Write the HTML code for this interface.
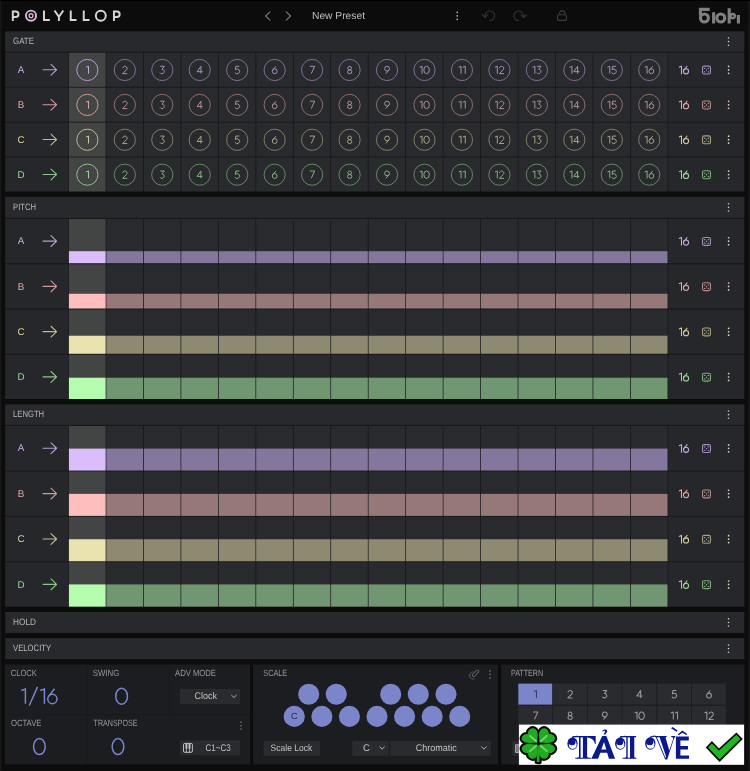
<!DOCTYPE html>
<html><head><meta charset="utf-8"><title>Polyllop</title>
<style>html,body{margin:0;padding:0;background:#0c0c0d;}svg{display:block;will-change:transform}text{font-family:"Liberation Sans",sans-serif;text-rendering:geometricPrecision;}</style></head>
<body>
<svg width="750" height="771" viewBox="0 0 750 771">
<rect width="750" height="771" fill="#0c0c0d"/>
<rect x="0.00" y="0.00" width="1.30" height="771.00" fill="#171718"/>
<rect x="748.20" y="0.00" width="1.80" height="771.00" fill="#171718"/>
<rect x="0.00" y="0.00" width="750.00" height="1.00" fill="#000"/>
<g fill="none" stroke="#d6d6d6" stroke-width="1.95" stroke-linejoin="miter"><path d="M12.8 10.5V21M12.8 11.45H15.7A2.75 2.75 0 0 1 15.7 16.95H12.8"/><path d="M43.95 10.5V20.05H49.8"/><path d="M54.5 10.5L58.9 16.7L63.3 10.5M58.9 16.2V21"/><path d="M70.75 10.5V20.05H76.5"/><path d="M83.75 10.5V20.05H89.5"/><circle cx="100.8" cy="15.75" r="4.95"/><path d="M113.95 10.5V21M113.95 11.45H116.9A2.75 2.75 0 0 1 116.9 16.95H113.95"/></g>
<circle cx="31.0" cy="15.7" r="5.05" fill="none" stroke="#d6b6f4" stroke-width="1.9"/>
<circle cx="31.0" cy="15.7" r="1.95" fill="none" stroke="#f0b0b0" stroke-width="1.3"/>
<path d="M270.0 11.9L265.6 16.0L270.0 20.1" fill="none" stroke="#7c7c7e" stroke-width="1.1" stroke-linecap="round" stroke-linejoin="round"/>
<path d="M286.2 11.9L290.6 16.0L286.2 20.1" fill="none" stroke="#7c7c7e" stroke-width="1.1" stroke-linecap="round" stroke-linejoin="round"/>
<text x="312.00" y="19.10" font-size="10.3" fill="#bfbfc1" textLength="53.00" lengthAdjust="spacingAndGlyphs">New Preset</text>
<circle cx="457.20" cy="12.40" r="0.8" fill="#bdbdbf"/>
<circle cx="457.20" cy="15.90" r="0.8" fill="#bdbdbf"/>
<circle cx="457.20" cy="19.40" r="0.8" fill="#bdbdbf"/>
<g fill="none" stroke="#353537" stroke-width="1.1" stroke-linecap="round" stroke-linejoin="round"><path d="M489.8 20.6A4.8 4.8 0 1 0 485.0 15.8M482.3 14.6L485.0 17.5L487.7 14.9"/><path d="M518.6 20.6A4.8 4.8 0 1 1 523.4 15.8M520.9 14.9L523.6 17.5L526.5 14.6"/></g>
<rect x="557.5" y="14.8" width="9.0" height="5.6" rx="1.3" fill="none" stroke="#3c3c3e" stroke-width="1.1"/>
<path d="M559.6 14.8V13.2A2.6 2.6 0 0 1 564.8 13.2V14.8" fill="none" stroke="#3c3c3e" stroke-width="1.1"/>
<g fill="none" stroke="#7f7f7f" stroke-width="3.1"><path d="M709.7 9.4H700.4V15.5"/><circle cx="704.4" cy="18.0" r="4.0"/><path d="M713.6 12.2V23.5"/><circle cx="720.8" cy="18.0" r="4.0"/><path d="M729.2 8.2V23.5"/><circle cx="732.7" cy="16.1" r="2.1" stroke-width="2.4"/><path d="M738.4 15.0V23.5"/></g>
<rect x="5.20" y="31.50" width="739.10" height="160.00" fill="#18181b"/>
<rect x="5.20" y="31.50" width="739.10" height="20.20" fill="#28292c"/>
<text x="13.10" y="44.30" font-size="9.2" fill="#b8b8ba" textLength="20.80" lengthAdjust="spacingAndGlyphs">GATE</text>
<circle cx="728.50" cy="38.00" r="0.8" fill="#d0d0d2"/>
<circle cx="728.50" cy="41.60" r="0.8" fill="#d0d0d2"/>
<circle cx="728.50" cy="45.20" r="0.8" fill="#d0d0d2"/>
<rect x="5.20" y="52.75" width="63.10" height="34.05" fill="#26272a"/>
<text x="21.00" y="72.93" font-size="9.8" fill="#c6abe6" text-anchor="middle">A</text>
<path d="M43.00 69.78H56.60M51.00 64.38L56.60 69.78L51.00 75.18" fill="none" stroke="#c6abe6" stroke-width="1.1" stroke-opacity="0.9" stroke-linecap="round" stroke-linejoin="round"/>
<rect x="668.30" y="52.75" width="76.00" height="34.05" fill="#26272a"/>
<g fill="none" stroke="#c6abe6" stroke-width="1.05"><path d="M678.9 67.17L681.5 66.17V74.17"/><circle cx="686.0" cy="71.28" r="2.6"/><path d="M687.3 65.97L683.8 70.17"/></g>
<rect x="702.55" y="66.12" width="7.9" height="7.9" rx="1.6" fill="none" stroke="#a08fbd" stroke-width="1.1"/>
<circle cx="704.76" cy="68.34" r="0.65" fill="#c6abe6"/>
<circle cx="708.24" cy="68.34" r="0.65" fill="#c6abe6"/>
<circle cx="706.50" cy="70.08" r="0.65" fill="#c6abe6"/>
<circle cx="704.76" cy="71.81" r="0.65" fill="#c6abe6"/>
<circle cx="708.24" cy="71.81" r="0.65" fill="#c6abe6"/>
<circle cx="728.60" cy="66.42" r="0.85" fill="#dccdf0"/>
<circle cx="728.60" cy="69.88" r="0.85" fill="#dccdf0"/>
<circle cx="728.60" cy="73.33" r="0.85" fill="#dccdf0"/>
<rect x="68.90" y="52.75" width="36.70" height="34.05" fill="#434444"/>
<circle cx="87.35" cy="69.98" r="10.6" fill="none" stroke="#b9a0d8" stroke-width="0.95"/>
<g fill="none" stroke="#c6abe6" stroke-width="1.000" stroke-linejoin="round"><path transform="translate(85.65,69.98) scale(1.0)" d="M0.5 -2.7L2.9 -3.7V3.7"/></g>
<rect x="106.36" y="52.75" width="36.70" height="34.05" fill="#292a2d"/>
<circle cx="124.81" cy="69.98" r="10.6" fill="none" stroke="#80729a" stroke-width="0.95"/>
<g fill="none" stroke="#a293bc" stroke-width="1.000" stroke-linejoin="round"><path transform="translate(121.91,69.98) scale(1.0)" d="M0.8 -1.7A2.2 2.05 0 1 1 4.55 -0.15L0.7 3.7H5.4"/></g>
<rect x="143.82" y="52.75" width="36.70" height="34.05" fill="#292a2d"/>
<circle cx="162.27" cy="69.98" r="10.6" fill="none" stroke="#80729a" stroke-width="0.95"/>
<g fill="none" stroke="#a293bc" stroke-width="1.000" stroke-linejoin="round"><path transform="translate(159.47,69.98) scale(1.0)" d="M0.8 -3.7H4.9L2.5 -0.8A2.3 2.25 0 1 1 0.5 2.6"/></g>
<rect x="181.28" y="52.75" width="36.70" height="34.05" fill="#292a2d"/>
<circle cx="199.73" cy="69.98" r="10.6" fill="none" stroke="#80729a" stroke-width="0.95"/>
<g fill="none" stroke="#a293bc" stroke-width="1.000" stroke-linejoin="round"><path transform="translate(196.53,69.98) scale(1.0)" d="M4.4 3.7V-3.7L0.55 1.7H6.1"/></g>
<rect x="218.74" y="52.75" width="36.70" height="34.05" fill="#292a2d"/>
<circle cx="237.19" cy="69.98" r="10.6" fill="none" stroke="#80729a" stroke-width="0.95"/>
<g fill="none" stroke="#a293bc" stroke-width="1.000" stroke-linejoin="round"><path transform="translate(234.39,69.98) scale(1.0)" d="M4.9 -3.7H1.45L1.0 -0.3A2.45 2.42 0 1 1 0.55 2.55"/></g>
<rect x="256.20" y="52.75" width="36.70" height="34.05" fill="#292a2d"/>
<circle cx="274.65" cy="69.98" r="10.6" fill="none" stroke="#80729a" stroke-width="0.95"/>
<g fill="none" stroke="#a293bc" stroke-width="1.000" stroke-linejoin="round"><path transform="translate(271.70,69.98) scale(1.0)" d="M4.3 -3.7L0.95 0.15M3.0 -1.1A2.4 2.4 0 1 0 3.0 3.7A2.4 2.4 0 1 0 3.0 -1.1Z"/></g>
<rect x="293.66" y="52.75" width="36.70" height="34.05" fill="#292a2d"/>
<circle cx="312.11" cy="69.98" r="10.6" fill="none" stroke="#80729a" stroke-width="0.95"/>
<g fill="none" stroke="#a293bc" stroke-width="1.000" stroke-linejoin="round"><path transform="translate(309.31,69.98) scale(1.0)" d="M0.5 -3.7H5.3L2.0 3.7"/></g>
<rect x="331.12" y="52.75" width="36.70" height="34.05" fill="#292a2d"/>
<circle cx="349.57" cy="69.98" r="10.6" fill="none" stroke="#80729a" stroke-width="0.95"/>
<g fill="none" stroke="#a293bc" stroke-width="1.000" stroke-linejoin="round"><path transform="translate(346.77,69.98) scale(1.0)" d="M2.9 -3.7A1.8 1.8 0 1 0 2.9 -0.1A1.8 1.8 0 1 0 2.9 -3.7ZM2.9 -0.1A2.15 1.9 0 1 0 2.9 3.7A2.15 1.9 0 1 0 2.9 -0.1Z"/></g>
<rect x="368.58" y="52.75" width="36.70" height="34.05" fill="#292a2d"/>
<circle cx="387.03" cy="69.98" r="10.6" fill="none" stroke="#80729a" stroke-width="0.95"/>
<g fill="none" stroke="#a293bc" stroke-width="1.000" stroke-linejoin="round"><path transform="translate(384.08,69.98) scale(1.0)" d="M5.05 -0.15L1.7 3.7M3.0 -3.7A2.4 2.4 0 1 0 3.0 1.1A2.4 2.4 0 1 0 3.0 -3.7Z"/></g>
<rect x="406.04" y="52.75" width="36.70" height="34.05" fill="#292a2d"/>
<circle cx="424.49" cy="69.98" r="10.6" fill="none" stroke="#80729a" stroke-width="0.95"/>
<g fill="none" stroke="#a293bc" stroke-width="1.000" stroke-linejoin="round"><path transform="translate(419.14,69.98) scale(1.0)" d="M0.5 -2.7L2.9 -3.7V3.7"/><path transform="translate(423.34,69.98) scale(1.0)" d="M3.25 -3.7A2.75 3.7 0 1 0 3.25 3.7A2.75 3.7 0 1 0 3.25 -3.7Z"/></g>
<rect x="443.50" y="52.75" width="36.70" height="34.05" fill="#292a2d"/>
<circle cx="461.95" cy="69.98" r="10.6" fill="none" stroke="#80729a" stroke-width="0.95"/>
<g fill="none" stroke="#a293bc" stroke-width="1.000" stroke-linejoin="round"><path transform="translate(458.15,69.98) scale(1.0)" d="M0.5 -2.7L2.9 -3.7V3.7"/><path transform="translate(462.35,69.98) scale(1.0)" d="M0.5 -2.7L2.9 -3.7V3.7"/></g>
<rect x="480.96" y="52.75" width="36.70" height="34.05" fill="#292a2d"/>
<circle cx="499.41" cy="69.98" r="10.6" fill="none" stroke="#80729a" stroke-width="0.95"/>
<g fill="none" stroke="#a293bc" stroke-width="1.000" stroke-linejoin="round"><path transform="translate(494.41,69.98) scale(1.0)" d="M0.5 -2.7L2.9 -3.7V3.7"/><path transform="translate(498.61,69.98) scale(1.0)" d="M0.8 -1.7A2.2 2.05 0 1 1 4.55 -0.15L0.7 3.7H5.4"/></g>
<rect x="518.42" y="52.75" width="36.70" height="34.05" fill="#292a2d"/>
<circle cx="536.87" cy="69.98" r="10.6" fill="none" stroke="#80729a" stroke-width="0.95"/>
<g fill="none" stroke="#a293bc" stroke-width="1.000" stroke-linejoin="round"><path transform="translate(531.97,69.98) scale(1.0)" d="M0.5 -2.7L2.9 -3.7V3.7"/><path transform="translate(536.17,69.98) scale(1.0)" d="M0.8 -3.7H4.9L2.5 -0.8A2.3 2.25 0 1 1 0.5 2.6"/></g>
<rect x="555.88" y="52.75" width="36.70" height="34.05" fill="#292a2d"/>
<circle cx="574.33" cy="69.98" r="10.6" fill="none" stroke="#80729a" stroke-width="0.95"/>
<g fill="none" stroke="#a293bc" stroke-width="1.000" stroke-linejoin="round"><path transform="translate(569.03,69.98) scale(1.0)" d="M0.5 -2.7L2.9 -3.7V3.7"/><path transform="translate(573.23,69.98) scale(1.0)" d="M4.4 3.7V-3.7L0.55 1.7H6.1"/></g>
<rect x="593.34" y="52.75" width="36.70" height="34.05" fill="#292a2d"/>
<circle cx="611.79" cy="69.98" r="10.6" fill="none" stroke="#80729a" stroke-width="0.95"/>
<g fill="none" stroke="#a293bc" stroke-width="1.000" stroke-linejoin="round"><path transform="translate(606.89,69.98) scale(1.0)" d="M0.5 -2.7L2.9 -3.7V3.7"/><path transform="translate(611.09,69.98) scale(1.0)" d="M4.9 -3.7H1.45L1.0 -0.3A2.45 2.42 0 1 1 0.55 2.55"/></g>
<rect x="630.80" y="52.75" width="36.70" height="34.05" fill="#292a2d"/>
<circle cx="649.25" cy="69.98" r="10.6" fill="none" stroke="#80729a" stroke-width="0.95"/>
<g fill="none" stroke="#a293bc" stroke-width="1.000" stroke-linejoin="round"><path transform="translate(644.20,69.98) scale(1.0)" d="M0.5 -2.7L2.9 -3.7V3.7"/><path transform="translate(648.40,69.98) scale(1.0)" d="M4.3 -3.7L0.95 0.15M3.0 -1.1A2.4 2.4 0 1 0 3.0 3.7A2.4 2.4 0 1 0 3.0 -1.1Z"/></g>
<rect x="5.20" y="87.65" width="63.10" height="34.05" fill="#26272a"/>
<text x="21.00" y="107.83" font-size="9.8" fill="#e3a7a7" text-anchor="middle">B</text>
<path d="M43.00 104.68H56.60M51.00 99.28L56.60 104.68L51.00 110.08" fill="none" stroke="#e3a7a7" stroke-width="1.1" stroke-opacity="0.9" stroke-linecap="round" stroke-linejoin="round"/>
<rect x="668.30" y="87.65" width="76.00" height="34.05" fill="#26272a"/>
<g fill="none" stroke="#e3a7a7" stroke-width="1.05"><path d="M678.9 102.08L681.5 101.08V109.08"/><circle cx="686.0" cy="106.18" r="2.6"/><path d="M687.3 100.88L683.8 105.08"/></g>
<rect x="702.55" y="101.03" width="7.9" height="7.9" rx="1.6" fill="none" stroke="#b58b8c" stroke-width="1.1"/>
<circle cx="704.76" cy="103.24" r="0.65" fill="#e3a7a7"/>
<circle cx="708.24" cy="103.24" r="0.65" fill="#e3a7a7"/>
<circle cx="706.50" cy="104.98" r="0.65" fill="#e3a7a7"/>
<circle cx="704.76" cy="106.71" r="0.65" fill="#e3a7a7"/>
<circle cx="708.24" cy="106.71" r="0.65" fill="#e3a7a7"/>
<circle cx="728.60" cy="101.33" r="0.85" fill="#f0c8c8"/>
<circle cx="728.60" cy="104.78" r="0.85" fill="#f0c8c8"/>
<circle cx="728.60" cy="108.23" r="0.85" fill="#f0c8c8"/>
<rect x="68.90" y="87.65" width="36.70" height="34.05" fill="#434444"/>
<circle cx="87.35" cy="104.88" r="10.6" fill="none" stroke="#d39c9c" stroke-width="0.95"/>
<g fill="none" stroke="#e3a7a7" stroke-width="1.000" stroke-linejoin="round"><path transform="translate(85.65,104.88) scale(1.0)" d="M0.5 -2.7L2.9 -3.7V3.7"/></g>
<rect x="106.36" y="87.65" width="36.70" height="34.05" fill="#292a2d"/>
<circle cx="124.81" cy="104.88" r="10.6" fill="none" stroke="#8f7173" stroke-width="0.95"/>
<g fill="none" stroke="#b08e90" stroke-width="1.000" stroke-linejoin="round"><path transform="translate(121.91,104.88) scale(1.0)" d="M0.8 -1.7A2.2 2.05 0 1 1 4.55 -0.15L0.7 3.7H5.4"/></g>
<rect x="143.82" y="87.65" width="36.70" height="34.05" fill="#292a2d"/>
<circle cx="162.27" cy="104.88" r="10.6" fill="none" stroke="#8f7173" stroke-width="0.95"/>
<g fill="none" stroke="#b08e90" stroke-width="1.000" stroke-linejoin="round"><path transform="translate(159.47,104.88) scale(1.0)" d="M0.8 -3.7H4.9L2.5 -0.8A2.3 2.25 0 1 1 0.5 2.6"/></g>
<rect x="181.28" y="87.65" width="36.70" height="34.05" fill="#292a2d"/>
<circle cx="199.73" cy="104.88" r="10.6" fill="none" stroke="#8f7173" stroke-width="0.95"/>
<g fill="none" stroke="#b08e90" stroke-width="1.000" stroke-linejoin="round"><path transform="translate(196.53,104.88) scale(1.0)" d="M4.4 3.7V-3.7L0.55 1.7H6.1"/></g>
<rect x="218.74" y="87.65" width="36.70" height="34.05" fill="#292a2d"/>
<circle cx="237.19" cy="104.88" r="10.6" fill="none" stroke="#8f7173" stroke-width="0.95"/>
<g fill="none" stroke="#b08e90" stroke-width="1.000" stroke-linejoin="round"><path transform="translate(234.39,104.88) scale(1.0)" d="M4.9 -3.7H1.45L1.0 -0.3A2.45 2.42 0 1 1 0.55 2.55"/></g>
<rect x="256.20" y="87.65" width="36.70" height="34.05" fill="#292a2d"/>
<circle cx="274.65" cy="104.88" r="10.6" fill="none" stroke="#8f7173" stroke-width="0.95"/>
<g fill="none" stroke="#b08e90" stroke-width="1.000" stroke-linejoin="round"><path transform="translate(271.70,104.88) scale(1.0)" d="M4.3 -3.7L0.95 0.15M3.0 -1.1A2.4 2.4 0 1 0 3.0 3.7A2.4 2.4 0 1 0 3.0 -1.1Z"/></g>
<rect x="293.66" y="87.65" width="36.70" height="34.05" fill="#292a2d"/>
<circle cx="312.11" cy="104.88" r="10.6" fill="none" stroke="#8f7173" stroke-width="0.95"/>
<g fill="none" stroke="#b08e90" stroke-width="1.000" stroke-linejoin="round"><path transform="translate(309.31,104.88) scale(1.0)" d="M0.5 -3.7H5.3L2.0 3.7"/></g>
<rect x="331.12" y="87.65" width="36.70" height="34.05" fill="#292a2d"/>
<circle cx="349.57" cy="104.88" r="10.6" fill="none" stroke="#8f7173" stroke-width="0.95"/>
<g fill="none" stroke="#b08e90" stroke-width="1.000" stroke-linejoin="round"><path transform="translate(346.77,104.88) scale(1.0)" d="M2.9 -3.7A1.8 1.8 0 1 0 2.9 -0.1A1.8 1.8 0 1 0 2.9 -3.7ZM2.9 -0.1A2.15 1.9 0 1 0 2.9 3.7A2.15 1.9 0 1 0 2.9 -0.1Z"/></g>
<rect x="368.58" y="87.65" width="36.70" height="34.05" fill="#292a2d"/>
<circle cx="387.03" cy="104.88" r="10.6" fill="none" stroke="#8f7173" stroke-width="0.95"/>
<g fill="none" stroke="#b08e90" stroke-width="1.000" stroke-linejoin="round"><path transform="translate(384.08,104.88) scale(1.0)" d="M5.05 -0.15L1.7 3.7M3.0 -3.7A2.4 2.4 0 1 0 3.0 1.1A2.4 2.4 0 1 0 3.0 -3.7Z"/></g>
<rect x="406.04" y="87.65" width="36.70" height="34.05" fill="#292a2d"/>
<circle cx="424.49" cy="104.88" r="10.6" fill="none" stroke="#8f7173" stroke-width="0.95"/>
<g fill="none" stroke="#b08e90" stroke-width="1.000" stroke-linejoin="round"><path transform="translate(419.14,104.88) scale(1.0)" d="M0.5 -2.7L2.9 -3.7V3.7"/><path transform="translate(423.34,104.88) scale(1.0)" d="M3.25 -3.7A2.75 3.7 0 1 0 3.25 3.7A2.75 3.7 0 1 0 3.25 -3.7Z"/></g>
<rect x="443.50" y="87.65" width="36.70" height="34.05" fill="#292a2d"/>
<circle cx="461.95" cy="104.88" r="10.6" fill="none" stroke="#8f7173" stroke-width="0.95"/>
<g fill="none" stroke="#b08e90" stroke-width="1.000" stroke-linejoin="round"><path transform="translate(458.15,104.88) scale(1.0)" d="M0.5 -2.7L2.9 -3.7V3.7"/><path transform="translate(462.35,104.88) scale(1.0)" d="M0.5 -2.7L2.9 -3.7V3.7"/></g>
<rect x="480.96" y="87.65" width="36.70" height="34.05" fill="#292a2d"/>
<circle cx="499.41" cy="104.88" r="10.6" fill="none" stroke="#8f7173" stroke-width="0.95"/>
<g fill="none" stroke="#b08e90" stroke-width="1.000" stroke-linejoin="round"><path transform="translate(494.41,104.88) scale(1.0)" d="M0.5 -2.7L2.9 -3.7V3.7"/><path transform="translate(498.61,104.88) scale(1.0)" d="M0.8 -1.7A2.2 2.05 0 1 1 4.55 -0.15L0.7 3.7H5.4"/></g>
<rect x="518.42" y="87.65" width="36.70" height="34.05" fill="#292a2d"/>
<circle cx="536.87" cy="104.88" r="10.6" fill="none" stroke="#8f7173" stroke-width="0.95"/>
<g fill="none" stroke="#b08e90" stroke-width="1.000" stroke-linejoin="round"><path transform="translate(531.97,104.88) scale(1.0)" d="M0.5 -2.7L2.9 -3.7V3.7"/><path transform="translate(536.17,104.88) scale(1.0)" d="M0.8 -3.7H4.9L2.5 -0.8A2.3 2.25 0 1 1 0.5 2.6"/></g>
<rect x="555.88" y="87.65" width="36.70" height="34.05" fill="#292a2d"/>
<circle cx="574.33" cy="104.88" r="10.6" fill="none" stroke="#8f7173" stroke-width="0.95"/>
<g fill="none" stroke="#b08e90" stroke-width="1.000" stroke-linejoin="round"><path transform="translate(569.03,104.88) scale(1.0)" d="M0.5 -2.7L2.9 -3.7V3.7"/><path transform="translate(573.23,104.88) scale(1.0)" d="M4.4 3.7V-3.7L0.55 1.7H6.1"/></g>
<rect x="593.34" y="87.65" width="36.70" height="34.05" fill="#292a2d"/>
<circle cx="611.79" cy="104.88" r="10.6" fill="none" stroke="#8f7173" stroke-width="0.95"/>
<g fill="none" stroke="#b08e90" stroke-width="1.000" stroke-linejoin="round"><path transform="translate(606.89,104.88) scale(1.0)" d="M0.5 -2.7L2.9 -3.7V3.7"/><path transform="translate(611.09,104.88) scale(1.0)" d="M4.9 -3.7H1.45L1.0 -0.3A2.45 2.42 0 1 1 0.55 2.55"/></g>
<rect x="630.80" y="87.65" width="36.70" height="34.05" fill="#292a2d"/>
<circle cx="649.25" cy="104.88" r="10.6" fill="none" stroke="#8f7173" stroke-width="0.95"/>
<g fill="none" stroke="#b08e90" stroke-width="1.000" stroke-linejoin="round"><path transform="translate(644.20,104.88) scale(1.0)" d="M0.5 -2.7L2.9 -3.7V3.7"/><path transform="translate(648.40,104.88) scale(1.0)" d="M4.3 -3.7L0.95 0.15M3.0 -1.1A2.4 2.4 0 1 0 3.0 3.7A2.4 2.4 0 1 0 3.0 -1.1Z"/></g>
<rect x="5.20" y="122.55" width="63.10" height="34.05" fill="#26272a"/>
<text x="21.00" y="142.72" font-size="9.8" fill="#d3cc9a" text-anchor="middle">C</text>
<path d="M43.00 139.57H56.60M51.00 134.17L56.60 139.57L51.00 144.97" fill="none" stroke="#d3cc9a" stroke-width="1.1" stroke-opacity="0.9" stroke-linecap="round" stroke-linejoin="round"/>
<rect x="668.30" y="122.55" width="76.00" height="34.05" fill="#26272a"/>
<g fill="none" stroke="#d3cc9a" stroke-width="1.05"><path d="M678.9 136.97L681.5 135.97V143.97"/><circle cx="686.0" cy="141.07" r="2.6"/><path d="M687.3 135.77L683.8 139.97"/></g>
<rect x="702.55" y="135.92" width="7.9" height="7.9" rx="1.6" fill="none" stroke="#a8a37f" stroke-width="1.1"/>
<circle cx="704.76" cy="138.14" r="0.65" fill="#d3cc9a"/>
<circle cx="708.24" cy="138.14" r="0.65" fill="#d3cc9a"/>
<circle cx="706.50" cy="139.87" r="0.65" fill="#d3cc9a"/>
<circle cx="704.76" cy="141.61" r="0.65" fill="#d3cc9a"/>
<circle cx="708.24" cy="141.61" r="0.65" fill="#d3cc9a"/>
<circle cx="728.60" cy="136.22" r="0.85" fill="#e6e0bd"/>
<circle cx="728.60" cy="139.67" r="0.85" fill="#e6e0bd"/>
<circle cx="728.60" cy="143.12" r="0.85" fill="#e6e0bd"/>
<rect x="68.90" y="122.55" width="36.70" height="34.05" fill="#434444"/>
<circle cx="87.35" cy="139.77" r="10.6" fill="none" stroke="#c6bf90" stroke-width="0.95"/>
<g fill="none" stroke="#d3cc9a" stroke-width="1.000" stroke-linejoin="round"><path transform="translate(85.65,139.77) scale(1.0)" d="M0.5 -2.7L2.9 -3.7V3.7"/></g>
<rect x="106.36" y="122.55" width="36.70" height="34.05" fill="#292a2d"/>
<circle cx="124.81" cy="139.77" r="10.6" fill="none" stroke="#858167" stroke-width="0.95"/>
<g fill="none" stroke="#a7a283" stroke-width="1.000" stroke-linejoin="round"><path transform="translate(121.91,139.77) scale(1.0)" d="M0.8 -1.7A2.2 2.05 0 1 1 4.55 -0.15L0.7 3.7H5.4"/></g>
<rect x="143.82" y="122.55" width="36.70" height="34.05" fill="#292a2d"/>
<circle cx="162.27" cy="139.77" r="10.6" fill="none" stroke="#858167" stroke-width="0.95"/>
<g fill="none" stroke="#a7a283" stroke-width="1.000" stroke-linejoin="round"><path transform="translate(159.47,139.77) scale(1.0)" d="M0.8 -3.7H4.9L2.5 -0.8A2.3 2.25 0 1 1 0.5 2.6"/></g>
<rect x="181.28" y="122.55" width="36.70" height="34.05" fill="#292a2d"/>
<circle cx="199.73" cy="139.77" r="10.6" fill="none" stroke="#858167" stroke-width="0.95"/>
<g fill="none" stroke="#a7a283" stroke-width="1.000" stroke-linejoin="round"><path transform="translate(196.53,139.77) scale(1.0)" d="M4.4 3.7V-3.7L0.55 1.7H6.1"/></g>
<rect x="218.74" y="122.55" width="36.70" height="34.05" fill="#292a2d"/>
<circle cx="237.19" cy="139.77" r="10.6" fill="none" stroke="#858167" stroke-width="0.95"/>
<g fill="none" stroke="#a7a283" stroke-width="1.000" stroke-linejoin="round"><path transform="translate(234.39,139.77) scale(1.0)" d="M4.9 -3.7H1.45L1.0 -0.3A2.45 2.42 0 1 1 0.55 2.55"/></g>
<rect x="256.20" y="122.55" width="36.70" height="34.05" fill="#292a2d"/>
<circle cx="274.65" cy="139.77" r="10.6" fill="none" stroke="#858167" stroke-width="0.95"/>
<g fill="none" stroke="#a7a283" stroke-width="1.000" stroke-linejoin="round"><path transform="translate(271.70,139.77) scale(1.0)" d="M4.3 -3.7L0.95 0.15M3.0 -1.1A2.4 2.4 0 1 0 3.0 3.7A2.4 2.4 0 1 0 3.0 -1.1Z"/></g>
<rect x="293.66" y="122.55" width="36.70" height="34.05" fill="#292a2d"/>
<circle cx="312.11" cy="139.77" r="10.6" fill="none" stroke="#858167" stroke-width="0.95"/>
<g fill="none" stroke="#a7a283" stroke-width="1.000" stroke-linejoin="round"><path transform="translate(309.31,139.77) scale(1.0)" d="M0.5 -3.7H5.3L2.0 3.7"/></g>
<rect x="331.12" y="122.55" width="36.70" height="34.05" fill="#292a2d"/>
<circle cx="349.57" cy="139.77" r="10.6" fill="none" stroke="#858167" stroke-width="0.95"/>
<g fill="none" stroke="#a7a283" stroke-width="1.000" stroke-linejoin="round"><path transform="translate(346.77,139.77) scale(1.0)" d="M2.9 -3.7A1.8 1.8 0 1 0 2.9 -0.1A1.8 1.8 0 1 0 2.9 -3.7ZM2.9 -0.1A2.15 1.9 0 1 0 2.9 3.7A2.15 1.9 0 1 0 2.9 -0.1Z"/></g>
<rect x="368.58" y="122.55" width="36.70" height="34.05" fill="#292a2d"/>
<circle cx="387.03" cy="139.77" r="10.6" fill="none" stroke="#858167" stroke-width="0.95"/>
<g fill="none" stroke="#a7a283" stroke-width="1.000" stroke-linejoin="round"><path transform="translate(384.08,139.77) scale(1.0)" d="M5.05 -0.15L1.7 3.7M3.0 -3.7A2.4 2.4 0 1 0 3.0 1.1A2.4 2.4 0 1 0 3.0 -3.7Z"/></g>
<rect x="406.04" y="122.55" width="36.70" height="34.05" fill="#292a2d"/>
<circle cx="424.49" cy="139.77" r="10.6" fill="none" stroke="#858167" stroke-width="0.95"/>
<g fill="none" stroke="#a7a283" stroke-width="1.000" stroke-linejoin="round"><path transform="translate(419.14,139.77) scale(1.0)" d="M0.5 -2.7L2.9 -3.7V3.7"/><path transform="translate(423.34,139.77) scale(1.0)" d="M3.25 -3.7A2.75 3.7 0 1 0 3.25 3.7A2.75 3.7 0 1 0 3.25 -3.7Z"/></g>
<rect x="443.50" y="122.55" width="36.70" height="34.05" fill="#292a2d"/>
<circle cx="461.95" cy="139.77" r="10.6" fill="none" stroke="#858167" stroke-width="0.95"/>
<g fill="none" stroke="#a7a283" stroke-width="1.000" stroke-linejoin="round"><path transform="translate(458.15,139.77) scale(1.0)" d="M0.5 -2.7L2.9 -3.7V3.7"/><path transform="translate(462.35,139.77) scale(1.0)" d="M0.5 -2.7L2.9 -3.7V3.7"/></g>
<rect x="480.96" y="122.55" width="36.70" height="34.05" fill="#292a2d"/>
<circle cx="499.41" cy="139.77" r="10.6" fill="none" stroke="#858167" stroke-width="0.95"/>
<g fill="none" stroke="#a7a283" stroke-width="1.000" stroke-linejoin="round"><path transform="translate(494.41,139.77) scale(1.0)" d="M0.5 -2.7L2.9 -3.7V3.7"/><path transform="translate(498.61,139.77) scale(1.0)" d="M0.8 -1.7A2.2 2.05 0 1 1 4.55 -0.15L0.7 3.7H5.4"/></g>
<rect x="518.42" y="122.55" width="36.70" height="34.05" fill="#292a2d"/>
<circle cx="536.87" cy="139.77" r="10.6" fill="none" stroke="#858167" stroke-width="0.95"/>
<g fill="none" stroke="#a7a283" stroke-width="1.000" stroke-linejoin="round"><path transform="translate(531.97,139.77) scale(1.0)" d="M0.5 -2.7L2.9 -3.7V3.7"/><path transform="translate(536.17,139.77) scale(1.0)" d="M0.8 -3.7H4.9L2.5 -0.8A2.3 2.25 0 1 1 0.5 2.6"/></g>
<rect x="555.88" y="122.55" width="36.70" height="34.05" fill="#292a2d"/>
<circle cx="574.33" cy="139.77" r="10.6" fill="none" stroke="#858167" stroke-width="0.95"/>
<g fill="none" stroke="#a7a283" stroke-width="1.000" stroke-linejoin="round"><path transform="translate(569.03,139.77) scale(1.0)" d="M0.5 -2.7L2.9 -3.7V3.7"/><path transform="translate(573.23,139.77) scale(1.0)" d="M4.4 3.7V-3.7L0.55 1.7H6.1"/></g>
<rect x="593.34" y="122.55" width="36.70" height="34.05" fill="#292a2d"/>
<circle cx="611.79" cy="139.77" r="10.6" fill="none" stroke="#858167" stroke-width="0.95"/>
<g fill="none" stroke="#a7a283" stroke-width="1.000" stroke-linejoin="round"><path transform="translate(606.89,139.77) scale(1.0)" d="M0.5 -2.7L2.9 -3.7V3.7"/><path transform="translate(611.09,139.77) scale(1.0)" d="M4.9 -3.7H1.45L1.0 -0.3A2.45 2.42 0 1 1 0.55 2.55"/></g>
<rect x="630.80" y="122.55" width="36.70" height="34.05" fill="#292a2d"/>
<circle cx="649.25" cy="139.77" r="10.6" fill="none" stroke="#858167" stroke-width="0.95"/>
<g fill="none" stroke="#a7a283" stroke-width="1.000" stroke-linejoin="round"><path transform="translate(644.20,139.77) scale(1.0)" d="M0.5 -2.7L2.9 -3.7V3.7"/><path transform="translate(648.40,139.77) scale(1.0)" d="M4.3 -3.7L0.95 0.15M3.0 -1.1A2.4 2.4 0 1 0 3.0 3.7A2.4 2.4 0 1 0 3.0 -1.1Z"/></g>
<rect x="5.20" y="157.45" width="63.10" height="34.05" fill="#26272a"/>
<text x="21.00" y="177.62" font-size="9.8" fill="#98d895" text-anchor="middle">D</text>
<path d="M43.00 174.47H56.60M51.00 169.07L56.60 174.47L51.00 179.88" fill="none" stroke="#98d895" stroke-width="1.1" stroke-opacity="0.9" stroke-linecap="round" stroke-linejoin="round"/>
<rect x="668.30" y="157.45" width="76.00" height="34.05" fill="#26272a"/>
<g fill="none" stroke="#98d895" stroke-width="1.05"><path d="M678.9 171.88L681.5 170.88V178.88"/><circle cx="686.0" cy="175.97" r="2.6"/><path d="M687.3 170.67L683.8 174.88"/></g>
<rect x="702.55" y="170.82" width="7.9" height="7.9" rx="1.6" fill="none" stroke="#7fae7d" stroke-width="1.1"/>
<circle cx="704.76" cy="173.04" r="0.65" fill="#98d895"/>
<circle cx="708.24" cy="173.04" r="0.65" fill="#98d895"/>
<circle cx="706.50" cy="174.77" r="0.65" fill="#98d895"/>
<circle cx="704.76" cy="176.51" r="0.65" fill="#98d895"/>
<circle cx="708.24" cy="176.51" r="0.65" fill="#98d895"/>
<circle cx="728.60" cy="171.12" r="0.85" fill="#bfe8bc"/>
<circle cx="728.60" cy="174.57" r="0.85" fill="#bfe8bc"/>
<circle cx="728.60" cy="178.02" r="0.85" fill="#bfe8bc"/>
<rect x="68.90" y="157.45" width="36.70" height="34.05" fill="#434444"/>
<circle cx="87.35" cy="174.67" r="10.6" fill="none" stroke="#8dca8a" stroke-width="0.95"/>
<g fill="none" stroke="#98d895" stroke-width="1.000" stroke-linejoin="round"><path transform="translate(85.65,174.67) scale(1.0)" d="M0.5 -2.7L2.9 -3.7V3.7"/></g>
<rect x="106.36" y="157.45" width="36.70" height="34.05" fill="#292a2d"/>
<circle cx="124.81" cy="174.67" r="10.6" fill="none" stroke="#658d65" stroke-width="0.95"/>
<g fill="none" stroke="#82b181" stroke-width="1.000" stroke-linejoin="round"><path transform="translate(121.91,174.67) scale(1.0)" d="M0.8 -1.7A2.2 2.05 0 1 1 4.55 -0.15L0.7 3.7H5.4"/></g>
<rect x="143.82" y="157.45" width="36.70" height="34.05" fill="#292a2d"/>
<circle cx="162.27" cy="174.67" r="10.6" fill="none" stroke="#658d65" stroke-width="0.95"/>
<g fill="none" stroke="#82b181" stroke-width="1.000" stroke-linejoin="round"><path transform="translate(159.47,174.67) scale(1.0)" d="M0.8 -3.7H4.9L2.5 -0.8A2.3 2.25 0 1 1 0.5 2.6"/></g>
<rect x="181.28" y="157.45" width="36.70" height="34.05" fill="#292a2d"/>
<circle cx="199.73" cy="174.67" r="10.6" fill="none" stroke="#658d65" stroke-width="0.95"/>
<g fill="none" stroke="#82b181" stroke-width="1.000" stroke-linejoin="round"><path transform="translate(196.53,174.67) scale(1.0)" d="M4.4 3.7V-3.7L0.55 1.7H6.1"/></g>
<rect x="218.74" y="157.45" width="36.70" height="34.05" fill="#292a2d"/>
<circle cx="237.19" cy="174.67" r="10.6" fill="none" stroke="#658d65" stroke-width="0.95"/>
<g fill="none" stroke="#82b181" stroke-width="1.000" stroke-linejoin="round"><path transform="translate(234.39,174.67) scale(1.0)" d="M4.9 -3.7H1.45L1.0 -0.3A2.45 2.42 0 1 1 0.55 2.55"/></g>
<rect x="256.20" y="157.45" width="36.70" height="34.05" fill="#292a2d"/>
<circle cx="274.65" cy="174.67" r="10.6" fill="none" stroke="#658d65" stroke-width="0.95"/>
<g fill="none" stroke="#82b181" stroke-width="1.000" stroke-linejoin="round"><path transform="translate(271.70,174.67) scale(1.0)" d="M4.3 -3.7L0.95 0.15M3.0 -1.1A2.4 2.4 0 1 0 3.0 3.7A2.4 2.4 0 1 0 3.0 -1.1Z"/></g>
<rect x="293.66" y="157.45" width="36.70" height="34.05" fill="#292a2d"/>
<circle cx="312.11" cy="174.67" r="10.6" fill="none" stroke="#658d65" stroke-width="0.95"/>
<g fill="none" stroke="#82b181" stroke-width="1.000" stroke-linejoin="round"><path transform="translate(309.31,174.67) scale(1.0)" d="M0.5 -3.7H5.3L2.0 3.7"/></g>
<rect x="331.12" y="157.45" width="36.70" height="34.05" fill="#292a2d"/>
<circle cx="349.57" cy="174.67" r="10.6" fill="none" stroke="#658d65" stroke-width="0.95"/>
<g fill="none" stroke="#82b181" stroke-width="1.000" stroke-linejoin="round"><path transform="translate(346.77,174.67) scale(1.0)" d="M2.9 -3.7A1.8 1.8 0 1 0 2.9 -0.1A1.8 1.8 0 1 0 2.9 -3.7ZM2.9 -0.1A2.15 1.9 0 1 0 2.9 3.7A2.15 1.9 0 1 0 2.9 -0.1Z"/></g>
<rect x="368.58" y="157.45" width="36.70" height="34.05" fill="#292a2d"/>
<circle cx="387.03" cy="174.67" r="10.6" fill="none" stroke="#658d65" stroke-width="0.95"/>
<g fill="none" stroke="#82b181" stroke-width="1.000" stroke-linejoin="round"><path transform="translate(384.08,174.67) scale(1.0)" d="M5.05 -0.15L1.7 3.7M3.0 -3.7A2.4 2.4 0 1 0 3.0 1.1A2.4 2.4 0 1 0 3.0 -3.7Z"/></g>
<rect x="406.04" y="157.45" width="36.70" height="34.05" fill="#292a2d"/>
<circle cx="424.49" cy="174.67" r="10.6" fill="none" stroke="#658d65" stroke-width="0.95"/>
<g fill="none" stroke="#82b181" stroke-width="1.000" stroke-linejoin="round"><path transform="translate(419.14,174.67) scale(1.0)" d="M0.5 -2.7L2.9 -3.7V3.7"/><path transform="translate(423.34,174.67) scale(1.0)" d="M3.25 -3.7A2.75 3.7 0 1 0 3.25 3.7A2.75 3.7 0 1 0 3.25 -3.7Z"/></g>
<rect x="443.50" y="157.45" width="36.70" height="34.05" fill="#292a2d"/>
<circle cx="461.95" cy="174.67" r="10.6" fill="none" stroke="#658d65" stroke-width="0.95"/>
<g fill="none" stroke="#82b181" stroke-width="1.000" stroke-linejoin="round"><path transform="translate(458.15,174.67) scale(1.0)" d="M0.5 -2.7L2.9 -3.7V3.7"/><path transform="translate(462.35,174.67) scale(1.0)" d="M0.5 -2.7L2.9 -3.7V3.7"/></g>
<rect x="480.96" y="157.45" width="36.70" height="34.05" fill="#292a2d"/>
<circle cx="499.41" cy="174.67" r="10.6" fill="none" stroke="#658d65" stroke-width="0.95"/>
<g fill="none" stroke="#82b181" stroke-width="1.000" stroke-linejoin="round"><path transform="translate(494.41,174.67) scale(1.0)" d="M0.5 -2.7L2.9 -3.7V3.7"/><path transform="translate(498.61,174.67) scale(1.0)" d="M0.8 -1.7A2.2 2.05 0 1 1 4.55 -0.15L0.7 3.7H5.4"/></g>
<rect x="518.42" y="157.45" width="36.70" height="34.05" fill="#292a2d"/>
<circle cx="536.87" cy="174.67" r="10.6" fill="none" stroke="#658d65" stroke-width="0.95"/>
<g fill="none" stroke="#82b181" stroke-width="1.000" stroke-linejoin="round"><path transform="translate(531.97,174.67) scale(1.0)" d="M0.5 -2.7L2.9 -3.7V3.7"/><path transform="translate(536.17,174.67) scale(1.0)" d="M0.8 -3.7H4.9L2.5 -0.8A2.3 2.25 0 1 1 0.5 2.6"/></g>
<rect x="555.88" y="157.45" width="36.70" height="34.05" fill="#292a2d"/>
<circle cx="574.33" cy="174.67" r="10.6" fill="none" stroke="#658d65" stroke-width="0.95"/>
<g fill="none" stroke="#82b181" stroke-width="1.000" stroke-linejoin="round"><path transform="translate(569.03,174.67) scale(1.0)" d="M0.5 -2.7L2.9 -3.7V3.7"/><path transform="translate(573.23,174.67) scale(1.0)" d="M4.4 3.7V-3.7L0.55 1.7H6.1"/></g>
<rect x="593.34" y="157.45" width="36.70" height="34.05" fill="#292a2d"/>
<circle cx="611.79" cy="174.67" r="10.6" fill="none" stroke="#658d65" stroke-width="0.95"/>
<g fill="none" stroke="#82b181" stroke-width="1.000" stroke-linejoin="round"><path transform="translate(606.89,174.67) scale(1.0)" d="M0.5 -2.7L2.9 -3.7V3.7"/><path transform="translate(611.09,174.67) scale(1.0)" d="M4.9 -3.7H1.45L1.0 -0.3A2.45 2.42 0 1 1 0.55 2.55"/></g>
<rect x="630.80" y="157.45" width="36.70" height="34.05" fill="#292a2d"/>
<circle cx="649.25" cy="174.67" r="10.6" fill="none" stroke="#658d65" stroke-width="0.95"/>
<g fill="none" stroke="#82b181" stroke-width="1.000" stroke-linejoin="round"><path transform="translate(644.20,174.67) scale(1.0)" d="M0.5 -2.7L2.9 -3.7V3.7"/><path transform="translate(648.40,174.67) scale(1.0)" d="M4.3 -3.7L0.95 0.15M3.0 -1.1A2.4 2.4 0 1 0 3.0 3.7A2.4 2.4 0 1 0 3.0 -1.1Z"/></g>
<rect x="5.20" y="196.80" width="739.10" height="202.21" fill="#18181b"/>
<rect x="5.20" y="196.80" width="739.10" height="21.10" fill="#28292c"/>
<text x="13.10" y="210.05" font-size="9.2" fill="#b8b8ba" textLength="23.00" lengthAdjust="spacingAndGlyphs">PITCH</text>
<circle cx="728.50" cy="203.75" r="0.8" fill="#d0d0d2"/>
<circle cx="728.50" cy="207.35" r="0.8" fill="#d0d0d2"/>
<circle cx="728.50" cy="210.95" r="0.8" fill="#d0d0d2"/>
<rect x="5.20" y="219.00" width="63.10" height="44.20" fill="#26272a"/>
<text x="21.00" y="244.25" font-size="9.8" fill="#c6abe6" text-anchor="middle">A</text>
<path d="M43.00 241.10H56.60M51.00 235.70L56.60 241.10L51.00 246.50" fill="none" stroke="#c6abe6" stroke-width="1.1" stroke-opacity="0.9" stroke-linecap="round" stroke-linejoin="round"/>
<rect x="668.30" y="219.00" width="76.00" height="44.20" fill="#26272a"/>
<g fill="none" stroke="#c6abe6" stroke-width="1.05"><path d="M678.9 238.50L681.5 237.50V245.50"/><circle cx="686.0" cy="242.60" r="2.6"/><path d="M687.3 237.30L683.8 241.50"/></g>
<rect x="702.55" y="237.45" width="7.9" height="7.9" rx="1.6" fill="none" stroke="#a08fbd" stroke-width="1.1"/>
<circle cx="704.76" cy="239.66" r="0.65" fill="#c6abe6"/>
<circle cx="708.24" cy="239.66" r="0.65" fill="#c6abe6"/>
<circle cx="706.50" cy="241.40" r="0.65" fill="#c6abe6"/>
<circle cx="704.76" cy="243.14" r="0.65" fill="#c6abe6"/>
<circle cx="708.24" cy="243.14" r="0.65" fill="#c6abe6"/>
<circle cx="728.60" cy="237.75" r="0.85" fill="#dccdf0"/>
<circle cx="728.60" cy="241.20" r="0.85" fill="#dccdf0"/>
<circle cx="728.60" cy="244.65" r="0.85" fill="#dccdf0"/>
<rect x="68.90" y="219.00" width="36.70" height="44.20" fill="#434444"/>
<rect x="68.90" y="251.20" width="36.70" height="12.00" fill="#dcbdfc"/>
<rect x="106.36" y="219.00" width="36.70" height="44.20" fill="#292a2d"/>
<rect x="106.36" y="251.20" width="36.70" height="12.00" fill="#85769d"/>
<rect x="143.82" y="219.00" width="36.70" height="44.20" fill="#292a2d"/>
<rect x="143.82" y="251.20" width="36.70" height="12.00" fill="#85769d"/>
<rect x="181.28" y="219.00" width="36.70" height="44.20" fill="#292a2d"/>
<rect x="181.28" y="251.20" width="36.70" height="12.00" fill="#85769d"/>
<rect x="218.74" y="219.00" width="36.70" height="44.20" fill="#292a2d"/>
<rect x="218.74" y="251.20" width="36.70" height="12.00" fill="#85769d"/>
<rect x="256.20" y="219.00" width="36.70" height="44.20" fill="#292a2d"/>
<rect x="256.20" y="251.20" width="36.70" height="12.00" fill="#85769d"/>
<rect x="293.66" y="219.00" width="36.70" height="44.20" fill="#292a2d"/>
<rect x="293.66" y="251.20" width="36.70" height="12.00" fill="#85769d"/>
<rect x="331.12" y="219.00" width="36.70" height="44.20" fill="#292a2d"/>
<rect x="331.12" y="251.20" width="36.70" height="12.00" fill="#85769d"/>
<rect x="368.58" y="219.00" width="36.70" height="44.20" fill="#292a2d"/>
<rect x="368.58" y="251.20" width="36.70" height="12.00" fill="#85769d"/>
<rect x="406.04" y="219.00" width="36.70" height="44.20" fill="#292a2d"/>
<rect x="406.04" y="251.20" width="36.70" height="12.00" fill="#85769d"/>
<rect x="443.50" y="219.00" width="36.70" height="44.20" fill="#292a2d"/>
<rect x="443.50" y="251.20" width="36.70" height="12.00" fill="#85769d"/>
<rect x="480.96" y="219.00" width="36.70" height="44.20" fill="#292a2d"/>
<rect x="480.96" y="251.20" width="36.70" height="12.00" fill="#85769d"/>
<rect x="518.42" y="219.00" width="36.70" height="44.20" fill="#292a2d"/>
<rect x="518.42" y="251.20" width="36.70" height="12.00" fill="#85769d"/>
<rect x="555.88" y="219.00" width="36.70" height="44.20" fill="#292a2d"/>
<rect x="555.88" y="251.20" width="36.70" height="12.00" fill="#85769d"/>
<rect x="593.34" y="219.00" width="36.70" height="44.20" fill="#292a2d"/>
<rect x="593.34" y="251.20" width="36.70" height="12.00" fill="#85769d"/>
<rect x="630.80" y="219.00" width="36.70" height="44.20" fill="#292a2d"/>
<rect x="630.80" y="251.20" width="36.70" height="12.00" fill="#85769d"/>
<rect x="5.20" y="264.27" width="63.10" height="44.20" fill="#26272a"/>
<text x="21.00" y="289.52" font-size="9.8" fill="#e3a7a7" text-anchor="middle">B</text>
<path d="M43.00 286.37H56.60M51.00 280.97L56.60 286.37L51.00 291.77" fill="none" stroke="#e3a7a7" stroke-width="1.1" stroke-opacity="0.9" stroke-linecap="round" stroke-linejoin="round"/>
<rect x="668.30" y="264.27" width="76.00" height="44.20" fill="#26272a"/>
<g fill="none" stroke="#e3a7a7" stroke-width="1.05"><path d="M678.9 283.77L681.5 282.77V290.77"/><circle cx="686.0" cy="287.87" r="2.6"/><path d="M687.3 282.57L683.8 286.77"/></g>
<rect x="702.55" y="282.72" width="7.9" height="7.9" rx="1.6" fill="none" stroke="#b58b8c" stroke-width="1.1"/>
<circle cx="704.76" cy="284.93" r="0.65" fill="#e3a7a7"/>
<circle cx="708.24" cy="284.93" r="0.65" fill="#e3a7a7"/>
<circle cx="706.50" cy="286.67" r="0.65" fill="#e3a7a7"/>
<circle cx="704.76" cy="288.41" r="0.65" fill="#e3a7a7"/>
<circle cx="708.24" cy="288.41" r="0.65" fill="#e3a7a7"/>
<circle cx="728.60" cy="283.02" r="0.85" fill="#f0c8c8"/>
<circle cx="728.60" cy="286.47" r="0.85" fill="#f0c8c8"/>
<circle cx="728.60" cy="289.92" r="0.85" fill="#f0c8c8"/>
<rect x="68.90" y="264.27" width="36.70" height="44.20" fill="#434444"/>
<rect x="68.90" y="293.77" width="36.70" height="14.70" fill="#ffbebe"/>
<rect x="106.36" y="264.27" width="36.70" height="44.20" fill="#292a2d"/>
<rect x="106.36" y="293.77" width="36.70" height="14.70" fill="#977879"/>
<rect x="143.82" y="264.27" width="36.70" height="44.20" fill="#292a2d"/>
<rect x="143.82" y="293.77" width="36.70" height="14.70" fill="#977879"/>
<rect x="181.28" y="264.27" width="36.70" height="44.20" fill="#292a2d"/>
<rect x="181.28" y="293.77" width="36.70" height="14.70" fill="#977879"/>
<rect x="218.74" y="264.27" width="36.70" height="44.20" fill="#292a2d"/>
<rect x="218.74" y="293.77" width="36.70" height="14.70" fill="#977879"/>
<rect x="256.20" y="264.27" width="36.70" height="44.20" fill="#292a2d"/>
<rect x="256.20" y="293.77" width="36.70" height="14.70" fill="#977879"/>
<rect x="293.66" y="264.27" width="36.70" height="44.20" fill="#292a2d"/>
<rect x="293.66" y="293.77" width="36.70" height="14.70" fill="#977879"/>
<rect x="331.12" y="264.27" width="36.70" height="44.20" fill="#292a2d"/>
<rect x="331.12" y="293.77" width="36.70" height="14.70" fill="#977879"/>
<rect x="368.58" y="264.27" width="36.70" height="44.20" fill="#292a2d"/>
<rect x="368.58" y="293.77" width="36.70" height="14.70" fill="#977879"/>
<rect x="406.04" y="264.27" width="36.70" height="44.20" fill="#292a2d"/>
<rect x="406.04" y="293.77" width="36.70" height="14.70" fill="#977879"/>
<rect x="443.50" y="264.27" width="36.70" height="44.20" fill="#292a2d"/>
<rect x="443.50" y="293.77" width="36.70" height="14.70" fill="#977879"/>
<rect x="480.96" y="264.27" width="36.70" height="44.20" fill="#292a2d"/>
<rect x="480.96" y="293.77" width="36.70" height="14.70" fill="#977879"/>
<rect x="518.42" y="264.27" width="36.70" height="44.20" fill="#292a2d"/>
<rect x="518.42" y="293.77" width="36.70" height="14.70" fill="#977879"/>
<rect x="555.88" y="264.27" width="36.70" height="44.20" fill="#292a2d"/>
<rect x="555.88" y="293.77" width="36.70" height="14.70" fill="#977879"/>
<rect x="593.34" y="264.27" width="36.70" height="44.20" fill="#292a2d"/>
<rect x="593.34" y="293.77" width="36.70" height="14.70" fill="#977879"/>
<rect x="630.80" y="264.27" width="36.70" height="44.20" fill="#292a2d"/>
<rect x="630.80" y="293.77" width="36.70" height="14.70" fill="#977879"/>
<rect x="5.20" y="309.54" width="63.10" height="44.20" fill="#26272a"/>
<text x="21.00" y="334.79" font-size="9.8" fill="#d3cc9a" text-anchor="middle">C</text>
<path d="M43.00 331.64H56.60M51.00 326.24L56.60 331.64L51.00 337.04" fill="none" stroke="#d3cc9a" stroke-width="1.1" stroke-opacity="0.9" stroke-linecap="round" stroke-linejoin="round"/>
<rect x="668.30" y="309.54" width="76.00" height="44.20" fill="#26272a"/>
<g fill="none" stroke="#d3cc9a" stroke-width="1.05"><path d="M678.9 329.04L681.5 328.04V336.04"/><circle cx="686.0" cy="333.14" r="2.6"/><path d="M687.3 327.84L683.8 332.04"/></g>
<rect x="702.55" y="327.99" width="7.9" height="7.9" rx="1.6" fill="none" stroke="#a8a37f" stroke-width="1.1"/>
<circle cx="704.76" cy="330.20" r="0.65" fill="#d3cc9a"/>
<circle cx="708.24" cy="330.20" r="0.65" fill="#d3cc9a"/>
<circle cx="706.50" cy="331.94" r="0.65" fill="#d3cc9a"/>
<circle cx="704.76" cy="333.68" r="0.65" fill="#d3cc9a"/>
<circle cx="708.24" cy="333.68" r="0.65" fill="#d3cc9a"/>
<circle cx="728.60" cy="328.29" r="0.85" fill="#e6e0bd"/>
<circle cx="728.60" cy="331.74" r="0.85" fill="#e6e0bd"/>
<circle cx="728.60" cy="335.19" r="0.85" fill="#e6e0bd"/>
<rect x="68.90" y="309.54" width="36.70" height="44.20" fill="#434444"/>
<rect x="68.90" y="335.74" width="36.70" height="18.00" fill="#eae2af"/>
<rect x="106.36" y="309.54" width="36.70" height="44.20" fill="#292a2d"/>
<rect x="106.36" y="335.74" width="36.70" height="18.00" fill="#8e8a71"/>
<rect x="143.82" y="309.54" width="36.70" height="44.20" fill="#292a2d"/>
<rect x="143.82" y="335.74" width="36.70" height="18.00" fill="#8e8a71"/>
<rect x="181.28" y="309.54" width="36.70" height="44.20" fill="#292a2d"/>
<rect x="181.28" y="335.74" width="36.70" height="18.00" fill="#8e8a71"/>
<rect x="218.74" y="309.54" width="36.70" height="44.20" fill="#292a2d"/>
<rect x="218.74" y="335.74" width="36.70" height="18.00" fill="#8e8a71"/>
<rect x="256.20" y="309.54" width="36.70" height="44.20" fill="#292a2d"/>
<rect x="256.20" y="335.74" width="36.70" height="18.00" fill="#8e8a71"/>
<rect x="293.66" y="309.54" width="36.70" height="44.20" fill="#292a2d"/>
<rect x="293.66" y="335.74" width="36.70" height="18.00" fill="#8e8a71"/>
<rect x="331.12" y="309.54" width="36.70" height="44.20" fill="#292a2d"/>
<rect x="331.12" y="335.74" width="36.70" height="18.00" fill="#8e8a71"/>
<rect x="368.58" y="309.54" width="36.70" height="44.20" fill="#292a2d"/>
<rect x="368.58" y="335.74" width="36.70" height="18.00" fill="#8e8a71"/>
<rect x="406.04" y="309.54" width="36.70" height="44.20" fill="#292a2d"/>
<rect x="406.04" y="335.74" width="36.70" height="18.00" fill="#8e8a71"/>
<rect x="443.50" y="309.54" width="36.70" height="44.20" fill="#292a2d"/>
<rect x="443.50" y="335.74" width="36.70" height="18.00" fill="#8e8a71"/>
<rect x="480.96" y="309.54" width="36.70" height="44.20" fill="#292a2d"/>
<rect x="480.96" y="335.74" width="36.70" height="18.00" fill="#8e8a71"/>
<rect x="518.42" y="309.54" width="36.70" height="44.20" fill="#292a2d"/>
<rect x="518.42" y="335.74" width="36.70" height="18.00" fill="#8e8a71"/>
<rect x="555.88" y="309.54" width="36.70" height="44.20" fill="#292a2d"/>
<rect x="555.88" y="335.74" width="36.70" height="18.00" fill="#8e8a71"/>
<rect x="593.34" y="309.54" width="36.70" height="44.20" fill="#292a2d"/>
<rect x="593.34" y="335.74" width="36.70" height="18.00" fill="#8e8a71"/>
<rect x="630.80" y="309.54" width="36.70" height="44.20" fill="#292a2d"/>
<rect x="630.80" y="335.74" width="36.70" height="18.00" fill="#8e8a71"/>
<rect x="5.20" y="354.81" width="63.10" height="44.20" fill="#26272a"/>
<text x="21.00" y="380.06" font-size="9.8" fill="#98d895" text-anchor="middle">D</text>
<path d="M43.00 376.91H56.60M51.00 371.51L56.60 376.91L51.00 382.31" fill="none" stroke="#98d895" stroke-width="1.1" stroke-opacity="0.9" stroke-linecap="round" stroke-linejoin="round"/>
<rect x="668.30" y="354.81" width="76.00" height="44.20" fill="#26272a"/>
<g fill="none" stroke="#98d895" stroke-width="1.05"><path d="M678.9 374.31L681.5 373.31V381.31"/><circle cx="686.0" cy="378.41" r="2.6"/><path d="M687.3 373.11L683.8 377.31"/></g>
<rect x="702.55" y="373.26" width="7.9" height="7.9" rx="1.6" fill="none" stroke="#7fae7d" stroke-width="1.1"/>
<circle cx="704.76" cy="375.47" r="0.65" fill="#98d895"/>
<circle cx="708.24" cy="375.47" r="0.65" fill="#98d895"/>
<circle cx="706.50" cy="377.21" r="0.65" fill="#98d895"/>
<circle cx="704.76" cy="378.95" r="0.65" fill="#98d895"/>
<circle cx="708.24" cy="378.95" r="0.65" fill="#98d895"/>
<circle cx="728.60" cy="373.56" r="0.85" fill="#bfe8bc"/>
<circle cx="728.60" cy="377.01" r="0.85" fill="#bfe8bc"/>
<circle cx="728.60" cy="380.46" r="0.85" fill="#bfe8bc"/>
<rect x="68.90" y="354.81" width="36.70" height="44.20" fill="#434444"/>
<rect x="68.90" y="377.71" width="36.70" height="21.30" fill="#b5fcae"/>
<rect x="106.36" y="354.81" width="36.70" height="44.20" fill="#292a2d"/>
<rect x="106.36" y="377.71" width="36.70" height="21.30" fill="#719672"/>
<rect x="143.82" y="354.81" width="36.70" height="44.20" fill="#292a2d"/>
<rect x="143.82" y="377.71" width="36.70" height="21.30" fill="#719672"/>
<rect x="181.28" y="354.81" width="36.70" height="44.20" fill="#292a2d"/>
<rect x="181.28" y="377.71" width="36.70" height="21.30" fill="#719672"/>
<rect x="218.74" y="354.81" width="36.70" height="44.20" fill="#292a2d"/>
<rect x="218.74" y="377.71" width="36.70" height="21.30" fill="#719672"/>
<rect x="256.20" y="354.81" width="36.70" height="44.20" fill="#292a2d"/>
<rect x="256.20" y="377.71" width="36.70" height="21.30" fill="#719672"/>
<rect x="293.66" y="354.81" width="36.70" height="44.20" fill="#292a2d"/>
<rect x="293.66" y="377.71" width="36.70" height="21.30" fill="#719672"/>
<rect x="331.12" y="354.81" width="36.70" height="44.20" fill="#292a2d"/>
<rect x="331.12" y="377.71" width="36.70" height="21.30" fill="#719672"/>
<rect x="368.58" y="354.81" width="36.70" height="44.20" fill="#292a2d"/>
<rect x="368.58" y="377.71" width="36.70" height="21.30" fill="#719672"/>
<rect x="406.04" y="354.81" width="36.70" height="44.20" fill="#292a2d"/>
<rect x="406.04" y="377.71" width="36.70" height="21.30" fill="#719672"/>
<rect x="443.50" y="354.81" width="36.70" height="44.20" fill="#292a2d"/>
<rect x="443.50" y="377.71" width="36.70" height="21.30" fill="#719672"/>
<rect x="480.96" y="354.81" width="36.70" height="44.20" fill="#292a2d"/>
<rect x="480.96" y="377.71" width="36.70" height="21.30" fill="#719672"/>
<rect x="518.42" y="354.81" width="36.70" height="44.20" fill="#292a2d"/>
<rect x="518.42" y="377.71" width="36.70" height="21.30" fill="#719672"/>
<rect x="555.88" y="354.81" width="36.70" height="44.20" fill="#292a2d"/>
<rect x="555.88" y="377.71" width="36.70" height="21.30" fill="#719672"/>
<rect x="593.34" y="354.81" width="36.70" height="44.20" fill="#292a2d"/>
<rect x="593.34" y="377.71" width="36.70" height="21.30" fill="#719672"/>
<rect x="630.80" y="354.81" width="36.70" height="44.20" fill="#292a2d"/>
<rect x="630.80" y="377.71" width="36.70" height="21.30" fill="#719672"/>
<rect x="5.20" y="404.40" width="739.10" height="202.21" fill="#18181b"/>
<rect x="5.20" y="404.40" width="739.10" height="20.50" fill="#28292c"/>
<text x="13.10" y="417.35" font-size="9.2" fill="#b8b8ba" textLength="31.00" lengthAdjust="spacingAndGlyphs">LENGTH</text>
<circle cx="728.50" cy="411.05" r="0.8" fill="#d0d0d2"/>
<circle cx="728.50" cy="414.65" r="0.8" fill="#d0d0d2"/>
<circle cx="728.50" cy="418.25" r="0.8" fill="#d0d0d2"/>
<rect x="5.20" y="426.00" width="63.10" height="44.50" fill="#26272a"/>
<text x="21.00" y="451.40" font-size="9.8" fill="#c6abe6" text-anchor="middle">A</text>
<path d="M43.00 448.25H56.60M51.00 442.85L56.60 448.25L51.00 453.65" fill="none" stroke="#c6abe6" stroke-width="1.1" stroke-opacity="0.9" stroke-linecap="round" stroke-linejoin="round"/>
<rect x="668.30" y="426.00" width="76.00" height="44.50" fill="#26272a"/>
<g fill="none" stroke="#c6abe6" stroke-width="1.05"><path d="M678.9 445.65L681.5 444.65V452.65"/><circle cx="686.0" cy="449.75" r="2.6"/><path d="M687.3 444.45L683.8 448.65"/></g>
<rect x="702.55" y="444.60" width="7.9" height="7.9" rx="1.6" fill="none" stroke="#a08fbd" stroke-width="1.1"/>
<circle cx="704.76" cy="446.81" r="0.65" fill="#c6abe6"/>
<circle cx="708.24" cy="446.81" r="0.65" fill="#c6abe6"/>
<circle cx="706.50" cy="448.55" r="0.65" fill="#c6abe6"/>
<circle cx="704.76" cy="450.29" r="0.65" fill="#c6abe6"/>
<circle cx="708.24" cy="450.29" r="0.65" fill="#c6abe6"/>
<circle cx="728.60" cy="444.90" r="0.85" fill="#dccdf0"/>
<circle cx="728.60" cy="448.35" r="0.85" fill="#dccdf0"/>
<circle cx="728.60" cy="451.80" r="0.85" fill="#dccdf0"/>
<rect x="68.90" y="426.00" width="36.70" height="44.50" fill="#434444"/>
<rect x="68.90" y="448.60" width="36.70" height="21.90" fill="#dcbdfc"/>
<rect x="106.36" y="426.00" width="36.70" height="44.50" fill="#292a2d"/>
<rect x="106.36" y="448.60" width="36.70" height="21.90" fill="#85769d"/>
<rect x="143.82" y="426.00" width="36.70" height="44.50" fill="#292a2d"/>
<rect x="143.82" y="448.60" width="36.70" height="21.90" fill="#85769d"/>
<rect x="181.28" y="426.00" width="36.70" height="44.50" fill="#292a2d"/>
<rect x="181.28" y="448.60" width="36.70" height="21.90" fill="#85769d"/>
<rect x="218.74" y="426.00" width="36.70" height="44.50" fill="#292a2d"/>
<rect x="218.74" y="448.60" width="36.70" height="21.90" fill="#85769d"/>
<rect x="256.20" y="426.00" width="36.70" height="44.50" fill="#292a2d"/>
<rect x="256.20" y="448.60" width="36.70" height="21.90" fill="#85769d"/>
<rect x="293.66" y="426.00" width="36.70" height="44.50" fill="#292a2d"/>
<rect x="293.66" y="448.60" width="36.70" height="21.90" fill="#85769d"/>
<rect x="331.12" y="426.00" width="36.70" height="44.50" fill="#292a2d"/>
<rect x="331.12" y="448.60" width="36.70" height="21.90" fill="#85769d"/>
<rect x="368.58" y="426.00" width="36.70" height="44.50" fill="#292a2d"/>
<rect x="368.58" y="448.60" width="36.70" height="21.90" fill="#85769d"/>
<rect x="406.04" y="426.00" width="36.70" height="44.50" fill="#292a2d"/>
<rect x="406.04" y="448.60" width="36.70" height="21.90" fill="#85769d"/>
<rect x="443.50" y="426.00" width="36.70" height="44.50" fill="#292a2d"/>
<rect x="443.50" y="448.60" width="36.70" height="21.90" fill="#85769d"/>
<rect x="480.96" y="426.00" width="36.70" height="44.50" fill="#292a2d"/>
<rect x="480.96" y="448.60" width="36.70" height="21.90" fill="#85769d"/>
<rect x="518.42" y="426.00" width="36.70" height="44.50" fill="#292a2d"/>
<rect x="518.42" y="448.60" width="36.70" height="21.90" fill="#85769d"/>
<rect x="555.88" y="426.00" width="36.70" height="44.50" fill="#292a2d"/>
<rect x="555.88" y="448.60" width="36.70" height="21.90" fill="#85769d"/>
<rect x="593.34" y="426.00" width="36.70" height="44.50" fill="#292a2d"/>
<rect x="593.34" y="448.60" width="36.70" height="21.90" fill="#85769d"/>
<rect x="630.80" y="426.00" width="36.70" height="44.50" fill="#292a2d"/>
<rect x="630.80" y="448.60" width="36.70" height="21.90" fill="#85769d"/>
<rect x="5.20" y="471.37" width="63.10" height="44.50" fill="#26272a"/>
<text x="21.00" y="496.77" font-size="9.8" fill="#e3a7a7" text-anchor="middle">B</text>
<path d="M43.00 493.62H56.60M51.00 488.22L56.60 493.62L51.00 499.02" fill="none" stroke="#e3a7a7" stroke-width="1.1" stroke-opacity="0.9" stroke-linecap="round" stroke-linejoin="round"/>
<rect x="668.30" y="471.37" width="76.00" height="44.50" fill="#26272a"/>
<g fill="none" stroke="#e3a7a7" stroke-width="1.05"><path d="M678.9 491.02L681.5 490.02V498.02"/><circle cx="686.0" cy="495.12" r="2.6"/><path d="M687.3 489.82L683.8 494.02"/></g>
<rect x="702.55" y="489.97" width="7.9" height="7.9" rx="1.6" fill="none" stroke="#b58b8c" stroke-width="1.1"/>
<circle cx="704.76" cy="492.18" r="0.65" fill="#e3a7a7"/>
<circle cx="708.24" cy="492.18" r="0.65" fill="#e3a7a7"/>
<circle cx="706.50" cy="493.92" r="0.65" fill="#e3a7a7"/>
<circle cx="704.76" cy="495.66" r="0.65" fill="#e3a7a7"/>
<circle cx="708.24" cy="495.66" r="0.65" fill="#e3a7a7"/>
<circle cx="728.60" cy="490.27" r="0.85" fill="#f0c8c8"/>
<circle cx="728.60" cy="493.72" r="0.85" fill="#f0c8c8"/>
<circle cx="728.60" cy="497.17" r="0.85" fill="#f0c8c8"/>
<rect x="68.90" y="471.37" width="36.70" height="44.50" fill="#434444"/>
<rect x="68.90" y="493.87" width="36.70" height="22.00" fill="#ffbebe"/>
<rect x="106.36" y="471.37" width="36.70" height="44.50" fill="#292a2d"/>
<rect x="106.36" y="493.87" width="36.70" height="22.00" fill="#977879"/>
<rect x="143.82" y="471.37" width="36.70" height="44.50" fill="#292a2d"/>
<rect x="143.82" y="493.87" width="36.70" height="22.00" fill="#977879"/>
<rect x="181.28" y="471.37" width="36.70" height="44.50" fill="#292a2d"/>
<rect x="181.28" y="493.87" width="36.70" height="22.00" fill="#977879"/>
<rect x="218.74" y="471.37" width="36.70" height="44.50" fill="#292a2d"/>
<rect x="218.74" y="493.87" width="36.70" height="22.00" fill="#977879"/>
<rect x="256.20" y="471.37" width="36.70" height="44.50" fill="#292a2d"/>
<rect x="256.20" y="493.87" width="36.70" height="22.00" fill="#977879"/>
<rect x="293.66" y="471.37" width="36.70" height="44.50" fill="#292a2d"/>
<rect x="293.66" y="493.87" width="36.70" height="22.00" fill="#977879"/>
<rect x="331.12" y="471.37" width="36.70" height="44.50" fill="#292a2d"/>
<rect x="331.12" y="493.87" width="36.70" height="22.00" fill="#977879"/>
<rect x="368.58" y="471.37" width="36.70" height="44.50" fill="#292a2d"/>
<rect x="368.58" y="493.87" width="36.70" height="22.00" fill="#977879"/>
<rect x="406.04" y="471.37" width="36.70" height="44.50" fill="#292a2d"/>
<rect x="406.04" y="493.87" width="36.70" height="22.00" fill="#977879"/>
<rect x="443.50" y="471.37" width="36.70" height="44.50" fill="#292a2d"/>
<rect x="443.50" y="493.87" width="36.70" height="22.00" fill="#977879"/>
<rect x="480.96" y="471.37" width="36.70" height="44.50" fill="#292a2d"/>
<rect x="480.96" y="493.87" width="36.70" height="22.00" fill="#977879"/>
<rect x="518.42" y="471.37" width="36.70" height="44.50" fill="#292a2d"/>
<rect x="518.42" y="493.87" width="36.70" height="22.00" fill="#977879"/>
<rect x="555.88" y="471.37" width="36.70" height="44.50" fill="#292a2d"/>
<rect x="555.88" y="493.87" width="36.70" height="22.00" fill="#977879"/>
<rect x="593.34" y="471.37" width="36.70" height="44.50" fill="#292a2d"/>
<rect x="593.34" y="493.87" width="36.70" height="22.00" fill="#977879"/>
<rect x="630.80" y="471.37" width="36.70" height="44.50" fill="#292a2d"/>
<rect x="630.80" y="493.87" width="36.70" height="22.00" fill="#977879"/>
<rect x="5.20" y="516.74" width="63.10" height="44.50" fill="#26272a"/>
<text x="21.00" y="542.14" font-size="9.8" fill="#d3cc9a" text-anchor="middle">C</text>
<path d="M43.00 538.99H56.60M51.00 533.59L56.60 538.99L51.00 544.39" fill="none" stroke="#d3cc9a" stroke-width="1.1" stroke-opacity="0.9" stroke-linecap="round" stroke-linejoin="round"/>
<rect x="668.30" y="516.74" width="76.00" height="44.50" fill="#26272a"/>
<g fill="none" stroke="#d3cc9a" stroke-width="1.05"><path d="M678.9 536.39L681.5 535.39V543.39"/><circle cx="686.0" cy="540.49" r="2.6"/><path d="M687.3 535.19L683.8 539.39"/></g>
<rect x="702.55" y="535.34" width="7.9" height="7.9" rx="1.6" fill="none" stroke="#a8a37f" stroke-width="1.1"/>
<circle cx="704.76" cy="537.55" r="0.65" fill="#d3cc9a"/>
<circle cx="708.24" cy="537.55" r="0.65" fill="#d3cc9a"/>
<circle cx="706.50" cy="539.29" r="0.65" fill="#d3cc9a"/>
<circle cx="704.76" cy="541.03" r="0.65" fill="#d3cc9a"/>
<circle cx="708.24" cy="541.03" r="0.65" fill="#d3cc9a"/>
<circle cx="728.60" cy="535.64" r="0.85" fill="#e6e0bd"/>
<circle cx="728.60" cy="539.09" r="0.85" fill="#e6e0bd"/>
<circle cx="728.60" cy="542.54" r="0.85" fill="#e6e0bd"/>
<rect x="68.90" y="516.74" width="36.70" height="44.50" fill="#434444"/>
<rect x="68.90" y="539.24" width="36.70" height="22.00" fill="#eae2af"/>
<rect x="106.36" y="516.74" width="36.70" height="44.50" fill="#292a2d"/>
<rect x="106.36" y="539.24" width="36.70" height="22.00" fill="#8e8a71"/>
<rect x="143.82" y="516.74" width="36.70" height="44.50" fill="#292a2d"/>
<rect x="143.82" y="539.24" width="36.70" height="22.00" fill="#8e8a71"/>
<rect x="181.28" y="516.74" width="36.70" height="44.50" fill="#292a2d"/>
<rect x="181.28" y="539.24" width="36.70" height="22.00" fill="#8e8a71"/>
<rect x="218.74" y="516.74" width="36.70" height="44.50" fill="#292a2d"/>
<rect x="218.74" y="539.24" width="36.70" height="22.00" fill="#8e8a71"/>
<rect x="256.20" y="516.74" width="36.70" height="44.50" fill="#292a2d"/>
<rect x="256.20" y="539.24" width="36.70" height="22.00" fill="#8e8a71"/>
<rect x="293.66" y="516.74" width="36.70" height="44.50" fill="#292a2d"/>
<rect x="293.66" y="539.24" width="36.70" height="22.00" fill="#8e8a71"/>
<rect x="331.12" y="516.74" width="36.70" height="44.50" fill="#292a2d"/>
<rect x="331.12" y="539.24" width="36.70" height="22.00" fill="#8e8a71"/>
<rect x="368.58" y="516.74" width="36.70" height="44.50" fill="#292a2d"/>
<rect x="368.58" y="539.24" width="36.70" height="22.00" fill="#8e8a71"/>
<rect x="406.04" y="516.74" width="36.70" height="44.50" fill="#292a2d"/>
<rect x="406.04" y="539.24" width="36.70" height="22.00" fill="#8e8a71"/>
<rect x="443.50" y="516.74" width="36.70" height="44.50" fill="#292a2d"/>
<rect x="443.50" y="539.24" width="36.70" height="22.00" fill="#8e8a71"/>
<rect x="480.96" y="516.74" width="36.70" height="44.50" fill="#292a2d"/>
<rect x="480.96" y="539.24" width="36.70" height="22.00" fill="#8e8a71"/>
<rect x="518.42" y="516.74" width="36.70" height="44.50" fill="#292a2d"/>
<rect x="518.42" y="539.24" width="36.70" height="22.00" fill="#8e8a71"/>
<rect x="555.88" y="516.74" width="36.70" height="44.50" fill="#292a2d"/>
<rect x="555.88" y="539.24" width="36.70" height="22.00" fill="#8e8a71"/>
<rect x="593.34" y="516.74" width="36.70" height="44.50" fill="#292a2d"/>
<rect x="593.34" y="539.24" width="36.70" height="22.00" fill="#8e8a71"/>
<rect x="630.80" y="516.74" width="36.70" height="44.50" fill="#292a2d"/>
<rect x="630.80" y="539.24" width="36.70" height="22.00" fill="#8e8a71"/>
<rect x="5.20" y="562.11" width="63.10" height="44.50" fill="#26272a"/>
<text x="21.00" y="587.51" font-size="9.8" fill="#98d895" text-anchor="middle">D</text>
<path d="M43.00 584.36H56.60M51.00 578.96L56.60 584.36L51.00 589.76" fill="none" stroke="#98d895" stroke-width="1.1" stroke-opacity="0.9" stroke-linecap="round" stroke-linejoin="round"/>
<rect x="668.30" y="562.11" width="76.00" height="44.50" fill="#26272a"/>
<g fill="none" stroke="#98d895" stroke-width="1.05"><path d="M678.9 581.76L681.5 580.76V588.76"/><circle cx="686.0" cy="585.86" r="2.6"/><path d="M687.3 580.56L683.8 584.76"/></g>
<rect x="702.55" y="580.71" width="7.9" height="7.9" rx="1.6" fill="none" stroke="#7fae7d" stroke-width="1.1"/>
<circle cx="704.76" cy="582.92" r="0.65" fill="#98d895"/>
<circle cx="708.24" cy="582.92" r="0.65" fill="#98d895"/>
<circle cx="706.50" cy="584.66" r="0.65" fill="#98d895"/>
<circle cx="704.76" cy="586.40" r="0.65" fill="#98d895"/>
<circle cx="708.24" cy="586.40" r="0.65" fill="#98d895"/>
<circle cx="728.60" cy="581.01" r="0.85" fill="#bfe8bc"/>
<circle cx="728.60" cy="584.46" r="0.85" fill="#bfe8bc"/>
<circle cx="728.60" cy="587.91" r="0.85" fill="#bfe8bc"/>
<rect x="68.90" y="562.11" width="36.70" height="44.50" fill="#434444"/>
<rect x="68.90" y="584.41" width="36.70" height="22.20" fill="#b5fcae"/>
<rect x="106.36" y="562.11" width="36.70" height="44.50" fill="#292a2d"/>
<rect x="106.36" y="584.41" width="36.70" height="22.20" fill="#719672"/>
<rect x="143.82" y="562.11" width="36.70" height="44.50" fill="#292a2d"/>
<rect x="143.82" y="584.41" width="36.70" height="22.20" fill="#719672"/>
<rect x="181.28" y="562.11" width="36.70" height="44.50" fill="#292a2d"/>
<rect x="181.28" y="584.41" width="36.70" height="22.20" fill="#719672"/>
<rect x="218.74" y="562.11" width="36.70" height="44.50" fill="#292a2d"/>
<rect x="218.74" y="584.41" width="36.70" height="22.20" fill="#719672"/>
<rect x="256.20" y="562.11" width="36.70" height="44.50" fill="#292a2d"/>
<rect x="256.20" y="584.41" width="36.70" height="22.20" fill="#719672"/>
<rect x="293.66" y="562.11" width="36.70" height="44.50" fill="#292a2d"/>
<rect x="293.66" y="584.41" width="36.70" height="22.20" fill="#719672"/>
<rect x="331.12" y="562.11" width="36.70" height="44.50" fill="#292a2d"/>
<rect x="331.12" y="584.41" width="36.70" height="22.20" fill="#719672"/>
<rect x="368.58" y="562.11" width="36.70" height="44.50" fill="#292a2d"/>
<rect x="368.58" y="584.41" width="36.70" height="22.20" fill="#719672"/>
<rect x="406.04" y="562.11" width="36.70" height="44.50" fill="#292a2d"/>
<rect x="406.04" y="584.41" width="36.70" height="22.20" fill="#719672"/>
<rect x="443.50" y="562.11" width="36.70" height="44.50" fill="#292a2d"/>
<rect x="443.50" y="584.41" width="36.70" height="22.20" fill="#719672"/>
<rect x="480.96" y="562.11" width="36.70" height="44.50" fill="#292a2d"/>
<rect x="480.96" y="584.41" width="36.70" height="22.20" fill="#719672"/>
<rect x="518.42" y="562.11" width="36.70" height="44.50" fill="#292a2d"/>
<rect x="518.42" y="584.41" width="36.70" height="22.20" fill="#719672"/>
<rect x="555.88" y="562.11" width="36.70" height="44.50" fill="#292a2d"/>
<rect x="555.88" y="584.41" width="36.70" height="22.20" fill="#719672"/>
<rect x="593.34" y="562.11" width="36.70" height="44.50" fill="#292a2d"/>
<rect x="593.34" y="584.41" width="36.70" height="22.20" fill="#719672"/>
<rect x="630.80" y="562.11" width="36.70" height="44.50" fill="#292a2d"/>
<rect x="630.80" y="584.41" width="36.70" height="22.20" fill="#719672"/>
<rect x="5.20" y="612.00" width="739.10" height="20.90" fill="#28292c"/>
<text x="13.10" y="625.15" font-size="9.2" fill="#b8b8ba" textLength="22.80" lengthAdjust="spacingAndGlyphs">HOLD</text>
<circle cx="728.50" cy="618.85" r="0.8" fill="#d0d0d2"/>
<circle cx="728.50" cy="622.45" r="0.8" fill="#d0d0d2"/>
<circle cx="728.50" cy="626.05" r="0.8" fill="#d0d0d2"/>
<rect x="5.20" y="638.10" width="739.10" height="21.00" fill="#28292c"/>
<text x="13.10" y="651.30" font-size="9.2" fill="#b8b8ba" textLength="38.00" lengthAdjust="spacingAndGlyphs">VELOCITY</text>
<circle cx="728.50" cy="645.00" r="0.8" fill="#d0d0d2"/>
<circle cx="728.50" cy="648.60" r="0.8" fill="#d0d0d2"/>
<circle cx="728.50" cy="652.20" r="0.8" fill="#d0d0d2"/>
<rect x="5.00" y="664.50" width="245.20" height="100.00" fill="#1c1d20"/>
<rect x="253.00" y="664.50" width="245.00" height="100.00" fill="#1c1d20"/>
<rect x="501.20" y="664.50" width="243.10" height="100.00" fill="#1c1d20"/>
<rect x="86.40" y="664.50" width="0.90" height="100.00" fill="#18191b"/>
<rect x="169.20" y="664.50" width="0.90" height="50.00" fill="#18191b"/>
<rect x="5.00" y="714.00" width="245.20" height="0.90" fill="#18191b"/>
<text x="10.70" y="675.70" font-size="9.0" fill="#98989a" textLength="26.20" lengthAdjust="spacingAndGlyphs">CLOCK</text>
<text x="92.70" y="675.70" font-size="9.0" fill="#98989a" textLength="26.60" lengthAdjust="spacingAndGlyphs">SWING</text>
<text x="175.00" y="675.70" font-size="9.0" fill="#98989a" textLength="41.00" lengthAdjust="spacingAndGlyphs">ADV MODE</text>
<text x="10.90" y="726.10" font-size="9.0" fill="#98989a" textLength="30.50" lengthAdjust="spacingAndGlyphs">OCTAVE</text>
<text x="93.60" y="726.10" font-size="9.0" fill="#98989a" textLength="43.80" lengthAdjust="spacingAndGlyphs">TRANSPOSE</text>
<g fill="none" stroke="#7b85c9" stroke-width="1.5" stroke-linejoin="miter"><path d="M21.3 690.5L25.4 689.0V703.7"/><path d="M37.5 686.9L29.3 705.5"/><path d="M40.2 690.5L44.4 689.0V703.7"/><circle cx="52.4" cy="699.0" r="4.65"/><path d="M54.5 688.7L48.4 696.6"/></g>
<ellipse cx="121.6" cy="696.2" rx="5.85" ry="8.0" fill="none" stroke="#7b85c9" stroke-width="1.5"/>
<ellipse cx="39.4" cy="746.6" rx="5.85" ry="8.0" fill="none" stroke="#7b85c9" stroke-width="1.5"/>
<ellipse cx="118.0" cy="746.6" rx="5.85" ry="8.0" fill="none" stroke="#7b85c9" stroke-width="1.5"/>
<rect x="180.00" y="688.90" width="60.10" height="15.10" fill="#2a2b2e"/>
<text x="205.80" y="698.90" font-size="9.6" fill="#c4c4c6" text-anchor="middle" textLength="22.40" lengthAdjust="spacingAndGlyphs">Clock</text>
<path d="M231.6 695.3L233.9 697.5L236.2 695.3" fill="none" stroke="#b0b0b2" stroke-width="1" stroke-linecap="round" stroke-linejoin="round"/>
<circle cx="241.00" cy="722.10" r="0.95" fill="#636365"/>
<circle cx="241.00" cy="725.60" r="0.95" fill="#636365"/>
<circle cx="241.00" cy="729.10" r="0.95" fill="#636365"/>
<rect x="180.00" y="740.40" width="60.00" height="15.00" fill="#2a2b2e"/>
<rect x="183.5" y="743.4" width="8.9" height="8.9" rx="1.2" fill="none" stroke="#c0c0c2" stroke-width="1"/>
<path d="M186.4 743.2V752.5M189.5 743.2V752.5" stroke="#c0c0c2" stroke-width="0.8"/>
<path d="M186.4 743.4V748.8M189.5 743.4V748.8" stroke="#c0c0c2" stroke-width="1.9"/>
<text x="218.10" y="751.00" font-size="9.6" fill="#c4c4c6" text-anchor="middle" textLength="25.20" lengthAdjust="spacingAndGlyphs">C1~C3</text>
<text x="263.30" y="675.90" font-size="9.0" fill="#98989a" textLength="23.90" lengthAdjust="spacingAndGlyphs">SCALE</text>
<circle cx="308.7" cy="694.2" r="10.55" fill="#7b85c9"/>
<circle cx="336.3" cy="694.2" r="10.55" fill="#7b85c9"/>
<circle cx="390.7" cy="694.2" r="10.55" fill="#7b85c9"/>
<circle cx="418.3" cy="694.2" r="10.55" fill="#7b85c9"/>
<circle cx="446.0" cy="694.2" r="10.55" fill="#7b85c9"/>
<circle cx="294.30" cy="716.4" r="10.55" fill="#7b85c9"/>
<circle cx="321.87" cy="716.4" r="10.55" fill="#7b85c9"/>
<circle cx="349.44" cy="716.4" r="10.55" fill="#7b85c9"/>
<circle cx="377.01" cy="716.4" r="10.55" fill="#7b85c9"/>
<circle cx="404.58" cy="716.4" r="10.55" fill="#7b85c9"/>
<circle cx="432.15" cy="716.4" r="10.55" fill="#7b85c9"/>
<circle cx="459.72" cy="716.4" r="10.55" fill="#7b85c9"/>
<text x="294.30" y="719.20" font-size="9.0" fill="#2a2d45" text-anchor="middle">C</text>
<g fill="none" stroke="#5e5e60" stroke-width="1"><rect x="471.6" y="671.9" width="8.0" height="2.7" rx="1.35" transform="rotate(-44 475.6 673.25)"/><path d="M472.76 671.76A3.7 3.7 0 1 0 474.36 678.97" stroke-linecap="round"/></g>
<circle cx="490.00" cy="670.90" r="0.95" fill="#636365"/>
<circle cx="490.00" cy="674.40" r="0.95" fill="#636365"/>
<circle cx="490.00" cy="677.90" r="0.95" fill="#636365"/>
<rect x="263.70" y="740.90" width="56.30" height="14.90" fill="#2a2b2e"/>
<text x="291.40" y="750.90" font-size="9.4" fill="#c4c4c6" text-anchor="middle" textLength="41.60" lengthAdjust="spacingAndGlyphs">Scale Lock</text>
<rect x="352.30" y="740.90" width="36.40" height="14.90" fill="#2a2b2e"/>
<text x="366.40" y="751.00" font-size="9.6" fill="#c4c4c6" text-anchor="middle">C</text>
<path d="M379.8 746.9L382.1 749.1L384.4 746.9" fill="none" stroke="#b0b0b2" stroke-width="1" stroke-linecap="round" stroke-linejoin="round"/>
<rect x="390.20" y="740.90" width="100.60" height="14.90" fill="#2a2b2e"/>
<text x="436.20" y="750.90" font-size="9.6" fill="#c4c4c6" text-anchor="middle" textLength="41.00" lengthAdjust="spacingAndGlyphs">Chromatic</text>
<path d="M481.6 746.9L483.9 749.1L486.2 746.9" fill="none" stroke="#b0b0b2" stroke-width="1" stroke-linecap="round" stroke-linejoin="round"/>
<text x="510.90" y="675.90" font-size="9.0" fill="#98989a" textLength="32.30" lengthAdjust="spacingAndGlyphs">PATTERN</text>
<rect x="518.30" y="683.60" width="33.90" height="21.00" fill="#7b85c9"/>
<g fill="none" stroke="#3a3f66" stroke-width="1.050" stroke-linejoin="round"><path transform="translate(533.60,694.20) scale(1.0)" d="M0.5 -2.7L2.9 -3.7V3.7"/></g>
<rect x="553.03" y="683.60" width="33.90" height="21.00" fill="#2a2b2e"/>
<g fill="none" stroke="#98989a" stroke-width="1.050" stroke-linejoin="round"><path transform="translate(567.13,694.20) scale(1.0)" d="M0.8 -1.7A2.2 2.05 0 1 1 4.55 -0.15L0.7 3.7H5.4"/></g>
<rect x="587.76" y="683.60" width="33.90" height="21.00" fill="#2a2b2e"/>
<g fill="none" stroke="#98989a" stroke-width="1.050" stroke-linejoin="round"><path transform="translate(601.96,694.20) scale(1.0)" d="M0.8 -3.7H4.9L2.5 -0.8A2.3 2.25 0 1 1 0.5 2.6"/></g>
<rect x="622.49" y="683.60" width="33.90" height="21.00" fill="#2a2b2e"/>
<g fill="none" stroke="#98989a" stroke-width="1.050" stroke-linejoin="round"><path transform="translate(636.29,694.20) scale(1.0)" d="M4.4 3.7V-3.7L0.55 1.7H6.1"/></g>
<rect x="657.22" y="683.60" width="33.90" height="21.00" fill="#2a2b2e"/>
<g fill="none" stroke="#98989a" stroke-width="1.050" stroke-linejoin="round"><path transform="translate(671.42,694.20) scale(1.0)" d="M4.9 -3.7H1.45L1.0 -0.3A2.45 2.42 0 1 1 0.55 2.55"/></g>
<rect x="691.95" y="683.60" width="33.90" height="21.00" fill="#2a2b2e"/>
<g fill="none" stroke="#98989a" stroke-width="1.050" stroke-linejoin="round"><path transform="translate(706.00,694.20) scale(1.0)" d="M4.3 -3.7L0.95 0.15M3.0 -1.1A2.4 2.4 0 1 0 3.0 3.7A2.4 2.4 0 1 0 3.0 -1.1Z"/></g>
<rect x="518.30" y="705.80" width="33.90" height="21.00" fill="#2a2b2e"/>
<g fill="none" stroke="#98989a" stroke-width="1.050" stroke-linejoin="round"><path transform="translate(532.50,715.70) scale(1.0)" d="M0.5 -3.7H5.3L2.0 3.7"/></g>
<rect x="553.03" y="705.80" width="33.90" height="21.00" fill="#2a2b2e"/>
<g fill="none" stroke="#98989a" stroke-width="1.050" stroke-linejoin="round"><path transform="translate(567.23,715.70) scale(1.0)" d="M2.9 -3.7A1.8 1.8 0 1 0 2.9 -0.1A1.8 1.8 0 1 0 2.9 -3.7ZM2.9 -0.1A2.15 1.9 0 1 0 2.9 3.7A2.15 1.9 0 1 0 2.9 -0.1Z"/></g>
<rect x="587.76" y="705.80" width="33.90" height="21.00" fill="#2a2b2e"/>
<g fill="none" stroke="#98989a" stroke-width="1.050" stroke-linejoin="round"><path transform="translate(601.81,715.70) scale(1.0)" d="M5.05 -0.15L1.7 3.7M3.0 -3.7A2.4 2.4 0 1 0 3.0 1.1A2.4 2.4 0 1 0 3.0 -3.7Z"/></g>
<rect x="622.49" y="705.80" width="33.90" height="21.00" fill="#2a2b2e"/>
<g fill="none" stroke="#98989a" stroke-width="1.050" stroke-linejoin="round"><path transform="translate(634.14,715.70) scale(1.0)" d="M0.5 -2.7L2.9 -3.7V3.7"/><path transform="translate(638.34,715.70) scale(1.0)" d="M3.25 -3.7A2.75 3.7 0 1 0 3.25 3.7A2.75 3.7 0 1 0 3.25 -3.7Z"/></g>
<rect x="657.22" y="705.80" width="33.90" height="21.00" fill="#2a2b2e"/>
<g fill="none" stroke="#98989a" stroke-width="1.050" stroke-linejoin="round"><path transform="translate(670.42,715.70) scale(1.0)" d="M0.5 -2.7L2.9 -3.7V3.7"/><path transform="translate(674.62,715.70) scale(1.0)" d="M0.5 -2.7L2.9 -3.7V3.7"/></g>
<rect x="691.95" y="705.80" width="33.90" height="21.00" fill="#2a2b2e"/>
<g fill="none" stroke="#98989a" stroke-width="1.050" stroke-linejoin="round"><path transform="translate(703.95,715.70) scale(1.0)" d="M0.5 -2.7L2.9 -3.7V3.7"/><path transform="translate(708.15,715.70) scale(1.0)" d="M0.8 -1.7A2.2 2.05 0 1 1 4.55 -0.15L0.7 3.7H5.4"/></g>
<rect x="512.20" y="741.20" width="8.00" height="14.50" fill="#2a2b2e"/>
<rect x="515.90" y="745.00" width="3.20" height="7.40" fill="#77777a"/>
<path d="M519.2 744.7H515.5V752.5H519.2" fill="none" stroke="#a6a6a8" stroke-width="1"/>
<rect x="518.90" y="724.60" width="225.20" height="40.20" fill="#ffffff"/>
<g fill="#0a1a8c">
<path d="M572.6 736.0H595.7V744.0H594.9C594.5 740.6 591.8 737.9 587.1 737.6V756.2C587.1 757.3 588.2 757.7 590.9 757.8V758.8H575.3V757.8C577.8 757.7 579.0 757.3 579.0 756.2V737.3H572.6Z"/>
<path d="M591.3 758.8L602.2 736.0H606.4L615.1 758.8H608.9L607.2 752.8H600.3L598.1 758.8ZM601.3 749.6H606.3L604.0 742.0Z" fill-rule="evenodd"/>
<path d="M602.3 730.9C603.2 729.2 606.6 728.8 607.2 730.8C607.6 732.3 605.9 733.0 605.4 734.5H603.6C603.9 733.0 605.2 732.3 605.0 731.3C604.8 730.5 603.5 730.8 602.8 731.7Z"/>
<path d="M620.3 736.0H636.1V737.3H634.3V756.2C634.3 757.3 634.9 757.7 636.4 757.8V758.8H622.6V757.8C625.2 757.7 626.3 757.3 626.3 756.2V737.3H620.3Z"/>
<path d="M654.6 736.0H666.6V737.0C665.6 737.1 665.4 737.6 665.8 738.6L669.3 750.6L673.0 739.4C673.5 737.8 673.0 737.1 671.2 737.0V736.0H675.4V737.0C674.6 737.3 674.2 738.0 673.6 739.8L667.2 759.4H665.2L656.4 738.4C656.0 737.4 655.6 737.1 654.6 737.0Z"/>
<path d="M675.9 736.6H688.8V740.5H680.4V746.0H688.0V749.4H680.4V755.4H689.1V758.8H675.9Z"/>
<path d="M677.7 734.4L682.3 730.4L687.2 734.0L686.2 735.0L682.3 732.7L678.7 735.3Z"/>
<path d="M671.0 728.2L672.6 726.9L677.5 730.6L676.6 731.8Z"/>
</g>
<g fill="#ffffff"><rect x="580.6" y="737.4" width="2.3" height="20.3"/><rect x="627.7" y="737.4" width="2.3" height="20.3"/><path d="M656.9 737.2H659.6L666.0 756.6L665.6 758.2Z"/></g>
<ellipse cx="572.5" cy="743.6" rx="5.15" ry="6.2" fill="#0a1a8c"/><ellipse cx="572.75" cy="744.6" rx="3.85" ry="4.35" fill="#ffffff"/><ellipse cx="572.0" cy="742.3000000000001" rx="3.5" ry="3.0" fill="#0a1a8c"/><path d="M572.0 737.7C574.0 736.3000000000001 575.5 736.2 577.5 736.3000000000001" fill="none" stroke="#0a1a8c" stroke-width="1.3"/>
<ellipse cx="620.2" cy="743.6" rx="5.15" ry="6.2" fill="#0a1a8c"/><ellipse cx="620.45" cy="744.6" rx="3.85" ry="4.35" fill="#ffffff"/><ellipse cx="619.7" cy="742.3000000000001" rx="3.5" ry="3.0" fill="#0a1a8c"/><path d="M619.7 737.7C621.7 736.3000000000001 623.2 736.2 625.2 736.3000000000001" fill="none" stroke="#0a1a8c" stroke-width="1.3"/>
<ellipse cx="650.3" cy="743.5" rx="5.15" ry="6.2" fill="#0a1a8c"/><ellipse cx="650.55" cy="744.5" rx="3.85" ry="4.35" fill="#ffffff"/><ellipse cx="649.8" cy="742.2" rx="3.5" ry="3.0" fill="#0a1a8c"/><path d="M649.8 737.6C651.8 736.2 653.3 736.1 655.3 736.2" fill="none" stroke="#0a1a8c" stroke-width="1.3"/>
<g stroke="#080808" stroke-width="4.2" stroke-linejoin="round" fill="#080808">
<path transform="translate(538.4,743.5) scale(0.93,0.85) rotate(45)" vector-effect="non-scaling-stroke" d="M0,-1.5 C-3,-5 -9.6,-8.5 -9.6,-13.6 C-9.6,-18.6 -3.2,-20.2 0,-15.6 C3.2,-20.2 9.6,-18.6 9.6,-13.6 C9.6,-8.5 3,-5 0,-1.5 Z"/>
<path transform="translate(538.4,743.5) scale(0.93,0.85) rotate(135)" vector-effect="non-scaling-stroke" d="M0,-1.5 C-3,-5 -9.6,-8.5 -9.6,-13.6 C-9.6,-18.6 -3.2,-20.2 0,-15.6 C3.2,-20.2 9.6,-18.6 9.6,-13.6 C9.6,-8.5 3,-5 0,-1.5 Z"/>
<path transform="translate(538.4,743.5) scale(0.93,0.85) rotate(225)" vector-effect="non-scaling-stroke" d="M0,-1.5 C-3,-5 -9.6,-8.5 -9.6,-13.6 C-9.6,-18.6 -3.2,-20.2 0,-15.6 C3.2,-20.2 9.6,-18.6 9.6,-13.6 C9.6,-8.5 3,-5 0,-1.5 Z"/>
<path transform="translate(538.4,743.5) scale(0.93,0.85) rotate(315)" vector-effect="non-scaling-stroke" d="M0,-1.5 C-3,-5 -9.6,-8.5 -9.6,-13.6 C-9.6,-18.6 -3.2,-20.2 0,-15.6 C3.2,-20.2 9.6,-18.6 9.6,-13.6 C9.6,-8.5 3,-5 0,-1.5 Z"/>
<path d="M537.5 745.5C537.5 752.5 536.9 757.5 536.6999999999999 761.9L539.6 762.1C539.4 756.5 539.6 751.5 539.6 745.5Z"/></g>
<g fill="#22aa22">
<path transform="translate(538.4,743.5) scale(0.93,0.85) rotate(45)" vector-effect="non-scaling-stroke" d="M0,-1.5 C-3,-5 -9.6,-8.5 -9.6,-13.6 C-9.6,-18.6 -3.2,-20.2 0,-15.6 C3.2,-20.2 9.6,-18.6 9.6,-13.6 C9.6,-8.5 3,-5 0,-1.5 Z"/>
<path transform="translate(538.4,743.5) scale(0.93,0.85) rotate(135)" vector-effect="non-scaling-stroke" d="M0,-1.5 C-3,-5 -9.6,-8.5 -9.6,-13.6 C-9.6,-18.6 -3.2,-20.2 0,-15.6 C3.2,-20.2 9.6,-18.6 9.6,-13.6 C9.6,-8.5 3,-5 0,-1.5 Z"/>
<path transform="translate(538.4,743.5) scale(0.93,0.85) rotate(225)" vector-effect="non-scaling-stroke" d="M0,-1.5 C-3,-5 -9.6,-8.5 -9.6,-13.6 C-9.6,-18.6 -3.2,-20.2 0,-15.6 C3.2,-20.2 9.6,-18.6 9.6,-13.6 C9.6,-8.5 3,-5 0,-1.5 Z"/>
<path transform="translate(538.4,743.5) scale(0.93,0.85) rotate(315)" vector-effect="non-scaling-stroke" d="M0,-1.5 C-3,-5 -9.6,-8.5 -9.6,-13.6 C-9.6,-18.6 -3.2,-20.2 0,-15.6 C3.2,-20.2 9.6,-18.6 9.6,-13.6 C9.6,-8.5 3,-5 0,-1.5 Z"/>
<path d="M537.5 745.5C537.5 752.5 536.9 757.5 536.6999999999999 761.9L539.6 762.1C539.4 756.5 539.6 751.5 539.6 745.5Z"/></g>
<g stroke="#7fe27f" stroke-width="1.8" opacity="0.85" stroke-linecap="round">
<path d="M540.6 745.7L546.8 751.1"/>
<path d="M540.6 741.3L546.8 735.9"/>
<path d="M536.1999999999999 745.7L530.0 751.1"/>
<path d="M536.1999999999999 741.3L530.0 735.9"/>
</g>
<path d="M706.9 747.5L711.9 742.2L718.9 749.6L736.4 733.7L741.6 738.9L719.6 760.7Z" fill="#20b820" stroke="#0a0a0a" stroke-width="1.7" stroke-linejoin="miter"/>
</svg>
</body></html>
